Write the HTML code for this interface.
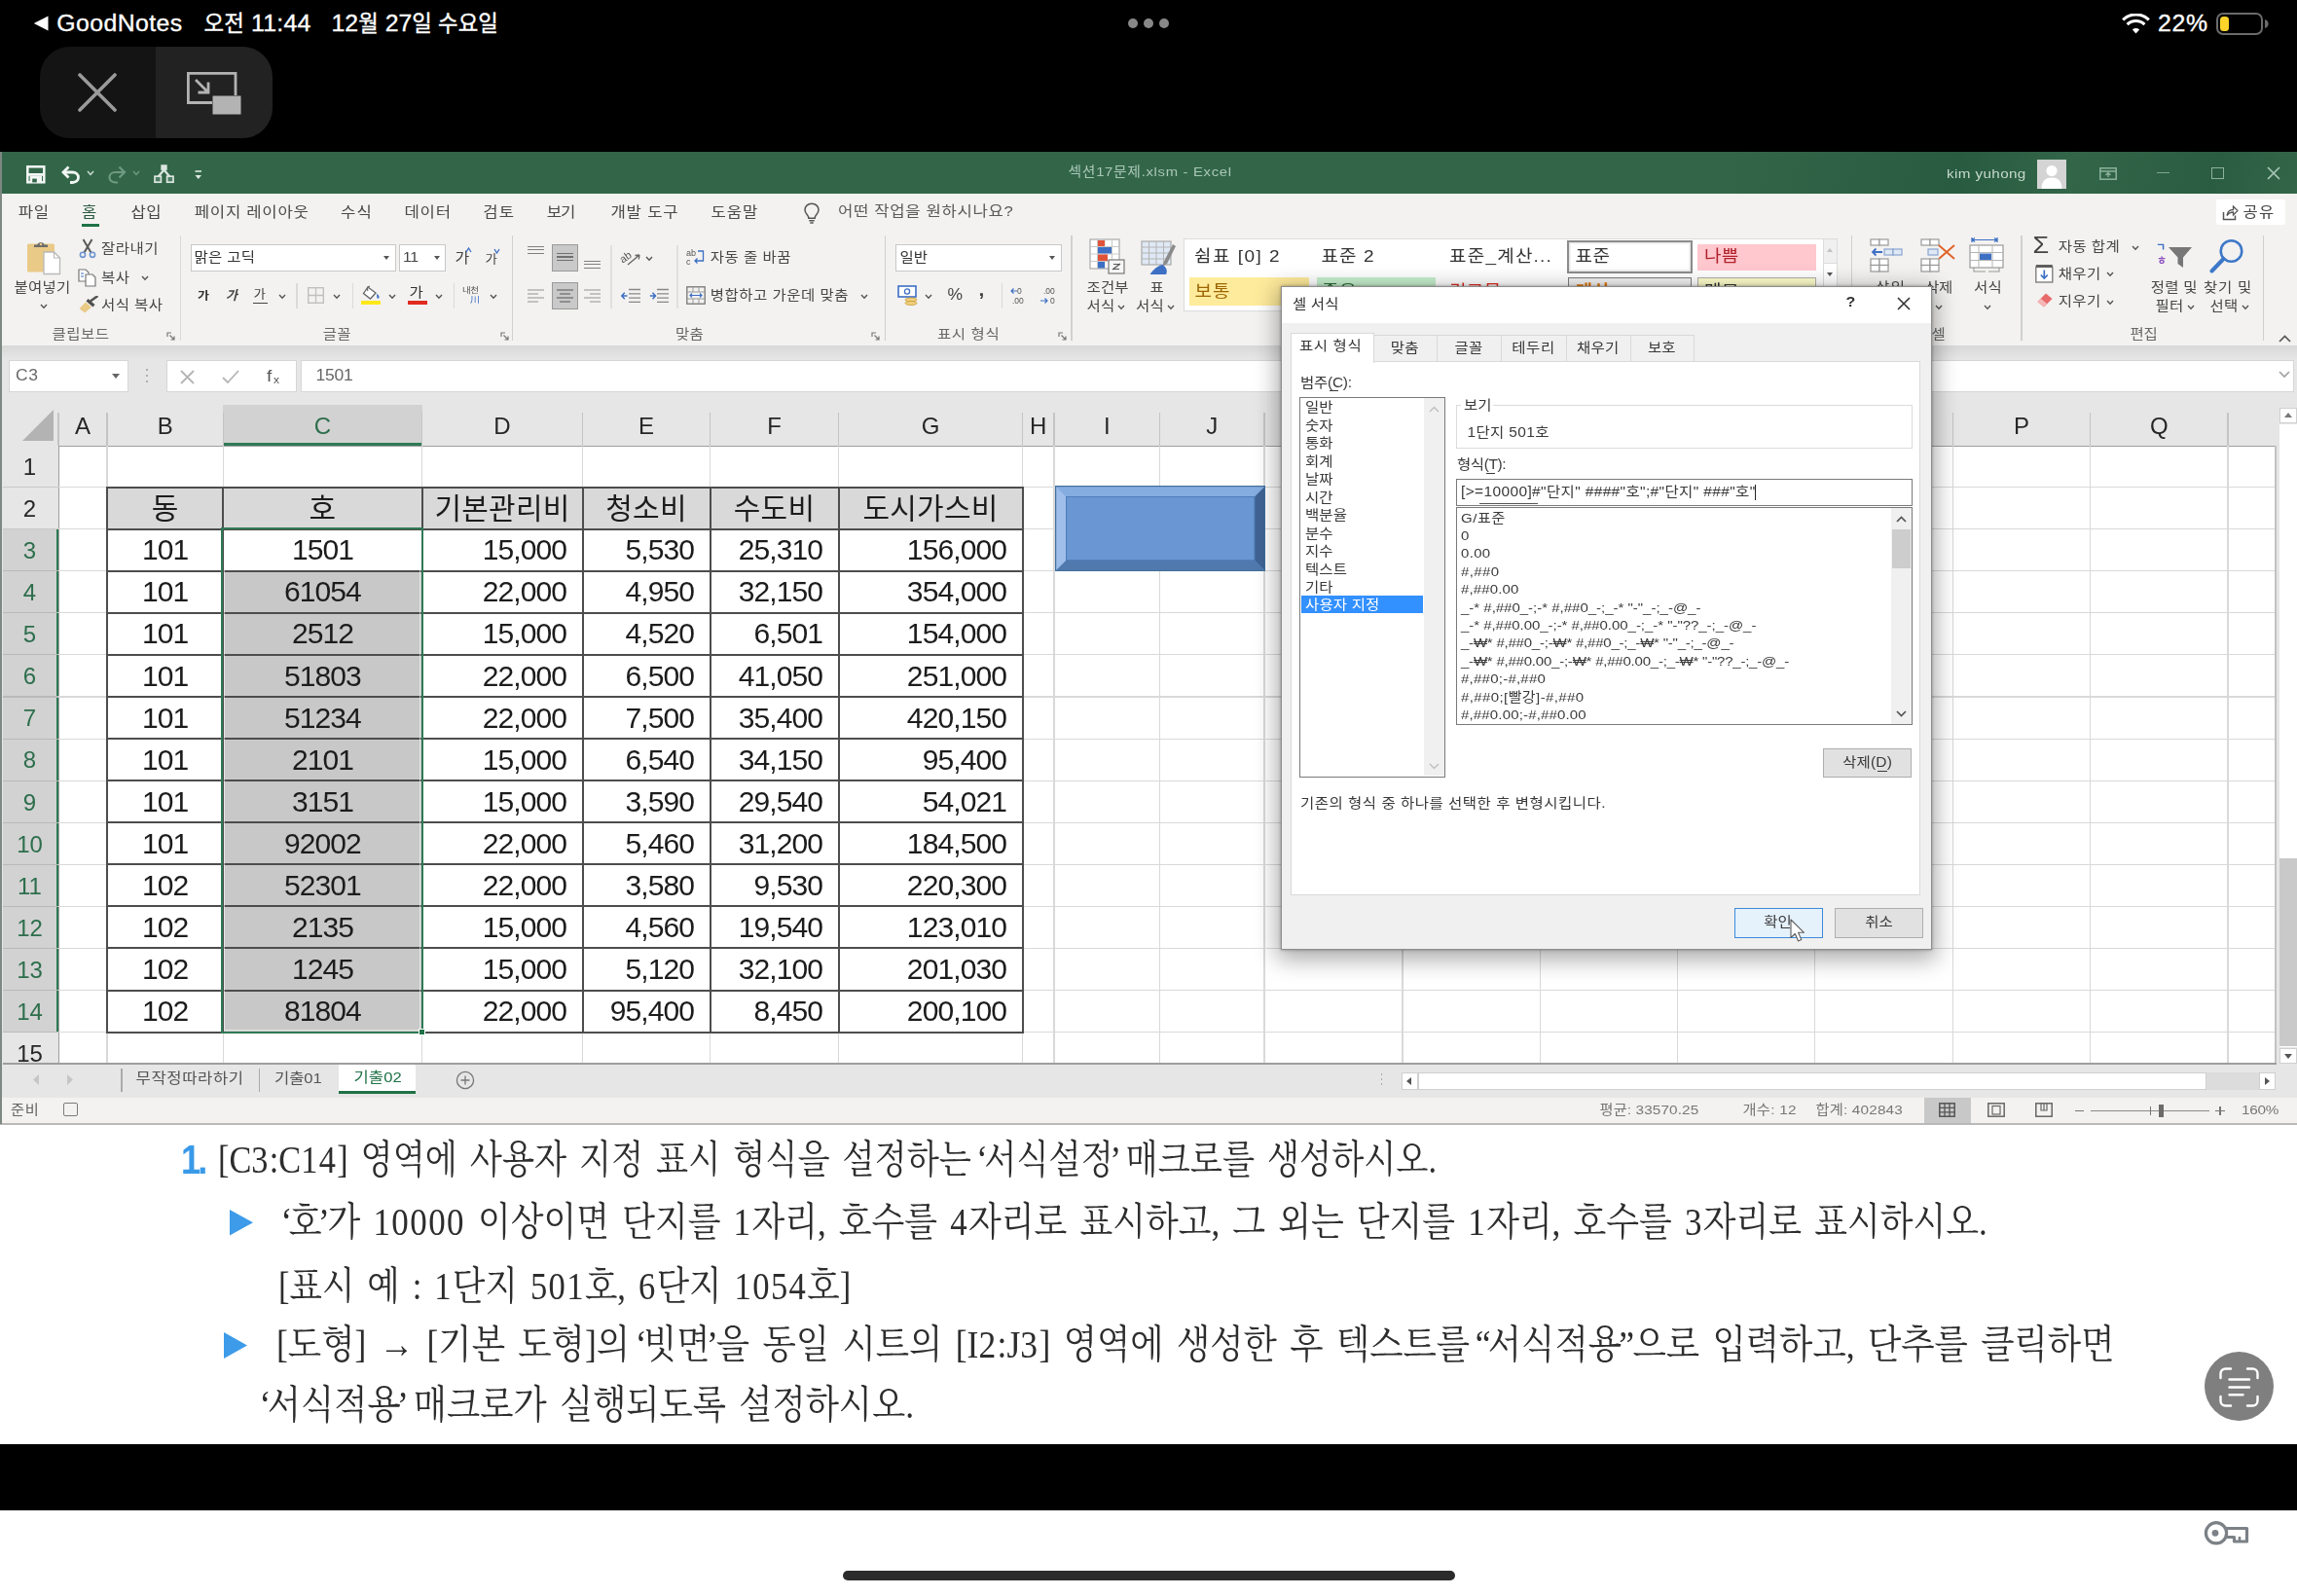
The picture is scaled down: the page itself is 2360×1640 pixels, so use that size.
<!DOCTYPE html>
<html lang="ko"><head><meta charset="utf-8"><title>Excel lecture</title>
<style>
html,body{margin:0;padding:0;background:#000}
body{width:2360px;height:1640px;position:relative;overflow:hidden;font-family:"Liberation Sans","Noto Sans CJK KR",sans-serif}
.a{position:absolute;box-sizing:border-box}
.t{position:absolute;white-space:nowrap;line-height:1}
.s{position:absolute;white-space:nowrap;line-height:1;font-family:"Liberation Serif","Noto Serif CJK SC",serif;color:#2d2d2d;transform-origin:0 50%}
#vid{position:absolute;left:0;top:0;width:2360px;height:1640px;filter:blur(.7px)}
#vid .t{transform:scaleY(.89)}
.cell{position:absolute;box-sizing:border-box;font-size:30px;line-height:43px;color:#1c1c1c;white-space:nowrap;letter-spacing:-.9px}
.hd{position:absolute;font-size:24px;line-height:42px;color:#262626;text-align:center;white-space:nowrap}
</style></head><body>
<div id="vid">
<div class="a" style="left:-10.0px;top:156.0px;width:2380.0px;height:42.5px;background:#336649;"></div>
<div class="a" style="left:1780.0px;top:156.0px;width:580.0px;height:42.5px;background:linear-gradient(100deg,rgba(0,0,0,0) 0%,rgba(20,70,45,.35) 40%,rgba(0,0,0,0) 60%,rgba(20,70,45,.3) 85%,rgba(0,0,0,0) 100%);"></div>
<div class="a" style="left:-10.0px;top:198.5px;width:2380.0px;height:157.0px;background:#f3f2f1;"></div>
<div class="a" style="left:-10.0px;top:355.0px;width:2380.0px;height:14.0px;background:linear-gradient(#d8d8d8,#e6e6e6);"></div>
<div class="a" style="left:-10.0px;top:368.5px;width:2380.0px;height:725.5px;background:#e6e6e6;"></div>
<div class="a" style="left:-10.0px;top:1093.0px;width:2380.0px;height:35.5px;background:#e6e6e6;"></div>
<div class="a" style="left:-10.0px;top:1128.0px;width:2380.0px;height:26.5px;background:#f3f2f1;"></div>
<div class="a" style="left:-10.0px;top:1154.0px;width:2380.0px;height:2.0px;background:#b9b9b9;"></div>
<div class="a" style="left:-10.0px;top:1156.0px;width:2380.0px;height:340.0px;background:#fff;"></div>
<div class="a" style="left:0.0px;top:156.0px;width:1.8px;height:999.0px;background:#7d8883;"></div>
<svg class="a" style="left:27.0px;top:170.0px;" width="20" height="19" viewBox="0 0 20 19"><rect x="1.3" y="1.3" width="17" height="16" fill="none" stroke="#f2f7f4" stroke-width="2.5"/><rect x="1.3" y="8" width="17" height="2.8" fill="#f2f7f4"/><rect x="3.600" y="10.8" width="12.4" height="6.200" fill="#f2f7f4"/><rect x="6.200" y="13.600" width="4.600" height="3.800" fill="#336649"/></svg>
<svg class="a" style="left:63.0px;top:170.0px;" width="20" height="19" viewBox="0 0 20 19"><path d="M2 7H11.5C15 7 17.5 9.3 17.5 12.3C17.5 15.3 15 17.5 11.5 17.5H9" fill="none" stroke="#f2f7f4" stroke-width="2.800"/><path d="M7.5 1.5L2 7L7.5 12.5" fill="none" stroke="#f2f7f4" stroke-width="2.800"/></svg>
<svg class="a" style="left:89.0px;top:175.0px;" width="8" height="6" viewBox="0 0 8 6"><path d="M1 1L4 4.5L7 1" stroke="#cfe0d6" stroke-width="1.4" fill="none"/></svg>
<svg class="a" style="left:110.0px;top:170.0px;" width="20" height="19" viewBox="0 0 20 19"><path d="M18 7H8.5C5 7 2.5 9.3 2.5 12.3C2.5 15.3 5 17.5 8.5 17.5H11" fill="none" stroke="#6f9a82" stroke-width="2.2"/><path d="M12.5 1.5L18 7L12.5 12.5" fill="none" stroke="#6f9a82" stroke-width="2.2"/></svg>
<svg class="a" style="left:136.0px;top:175.0px;" width="8" height="6" viewBox="0 0 8 6"><path d="M1 1L4 4.5L7 1" stroke="#6f9a82" stroke-width="1.4" fill="none"/></svg>
<svg class="a" style="left:157.5px;top:169.0px;" width="21" height="20" viewBox="0 0 21 20"><rect x="7.300" y=".3" width="6.400" height="5.600" fill="#dbe7e0"/><path d="M10.500 5.500L4.200 13M10.500 5.500L16.800 13" stroke="#dbe7e0" stroke-width="2.200"/><rect x="1" y="12.200" width="6.400" height="6" fill="#4d7d63" stroke="#dbe7e0" stroke-width="1.700"/><rect x="13.600" y="12.200" width="6.400" height="6" fill="#4d7d63" stroke="#dbe7e0" stroke-width="1.700"/></svg>
<svg class="a" style="left:199.5px;top:174.5px;" width="8" height="10" viewBox="0 0 8 10"><path d="M.5 1H7" stroke="#c9dbd0" stroke-width="1.800"/><path d="M.5 5L3.750 9L7 5Z" fill="#dfeae3"/></svg>
<div class="t" style="top:170.2px;font-size:14.8px;color:#a9c6b6;left:1097.5px;letter-spacing:0.71px;">섹션17문제.xlsm  -  Excel</div>
<div class="t" style="top:171.1px;font-size:15.2px;color:#c4d8cc;left:2000.0px;letter-spacing:0.40px;">kim yuhong</div>
<div class="a" style="left:2093.0px;top:163.5px;width:30.0px;height:30.0px;background:#d4d4d4;"></div>
<svg class="a" style="left:2093.0px;top:163.5px;" width="30" height="30" viewBox="0 0 30 30"><circle cx="15" cy="11.5" r="5.6" fill="#fff"/><path d="M4.5 30C4.5 21.5 9 18.5 15 18.5C21 18.5 25.5 21.5 25.5 30Z" fill="#fff"/></svg>
<svg class="a" style="left:2157.0px;top:171.5px;" width="18" height="13" viewBox="0 0 18 13"><rect x=".8" y=".8" width="16.4" height="11.4" fill="none" stroke="#8db29e" stroke-width="1.5"/><path d="M.8 4H17.2M9 10V5.5M6.5 8L9 5.5L11.5 8" fill="none" stroke="#8db29e" stroke-width="1.4"/></svg>
<div class="a" style="left:2216.0px;top:176.5px;width:13.0px;height:1.6px;background:#7da58f;"></div>
<div class="a" style="left:2272.0px;top:171.5px;width:13.0px;height:12.0px;border:1.6px solid #8db29e;"></div>
<svg class="a" style="left:2329.0px;top:171.0px;" width="14" height="14" viewBox="0 0 14 14"><path d="M1 1L13 13M13 1L1 13" stroke="#a9c6b6" stroke-width="1.7" fill="none"/></svg>
<div class="t" style="top:210.8px;font-size:16.7px;color:#4a4a4a;left:18.8px;letter-spacing:0.49px;">파일</div>
<div class="t" style="top:210.8px;font-size:16.7px;color:#2b5a41;left:84.0px;">홈</div>
<div class="t" style="top:210.8px;font-size:16.7px;color:#4a4a4a;left:134.5px;letter-spacing:0.44px;">삽입</div>
<div class="t" style="top:210.8px;font-size:16.7px;color:#4a4a4a;left:199.8px;letter-spacing:0.70px;">페이지 레이아웃</div>
<div class="t" style="top:210.8px;font-size:16.7px;color:#4a4a4a;left:350.0px;letter-spacing:1.09px;">수식</div>
<div class="t" style="top:210.8px;font-size:16.7px;color:#4a4a4a;left:415.4px;letter-spacing:0.81px;">데이터</div>
<div class="t" style="top:210.8px;font-size:16.7px;color:#4a4a4a;left:496.3px;letter-spacing:1.09px;">검토</div>
<div class="t" style="top:210.8px;font-size:16.7px;color:#4a4a4a;left:561.7px;letter-spacing:-1.11px;">보기</div>
<div class="t" style="top:210.8px;font-size:16.7px;color:#4a4a4a;left:627.4px;letter-spacing:0.81px;">개발 도구</div>
<div class="t" style="top:210.8px;font-size:16.7px;color:#4a4a4a;left:730.6px;letter-spacing:0.81px;">도움말</div>
<div class="a" style="left:84.0px;top:230.3px;width:18.0px;height:3.0px;background:#1f7246;"></div>
<svg class="a" style="left:825.0px;top:208.0px;" width="18" height="22" viewBox="0 0 18 22"><path d="M9 1.2C4.8 1.2 2 4.2 2 7.8C2 10.4 3.6 11.8 4.8 13.4C5.5 14.3 5.8 15.2 5.8 16.2H12.2C12.2 15.2 12.5 14.3 13.2 13.4C14.4 11.8 16 10.4 16 7.8C16 4.2 13.2 1.2 9 1.2Z" fill="none" stroke="#555" stroke-width="1.5"/><path d="M6.3 18.8H11.7M7.3 21H10.7" stroke="#555" stroke-width="1.4"/></svg>
<div class="t" style="top:210.1px;font-size:16.7px;color:#5a5a5a;left:861.0px;letter-spacing:0.65px;">어떤 작업을 원하시나요?</div>
<div class="a" style="left:2276.5px;top:205.0px;width:71.0px;height:26.0px;background:#fff;border-radius:2px;"></div>
<svg class="a" style="left:2283.0px;top:209.5px;" width="17" height="17" viewBox="0 0 17 17"><path d="M1.5 8V15.5H13.5V11.5" fill="none" stroke="#555" stroke-width="1.5"/><path d="M5 11.5C5.5 7.5 8 5.5 11.5 5.5V2L16 6.5L11.5 11V8C9 8 6.8 9 5 11.5Z" fill="none" stroke="#555" stroke-width="1.3"/></svg>
<div class="t" style="top:209.9px;font-size:16.5px;color:#444;left:2304.5px;letter-spacing:1.21px;">공유</div>
<svg class="a" style="left:27.0px;top:244.5px;" width="38" height="38" viewBox="0 0 38 38"><rect x="1" y="5.500" width="28" height="29" rx="1.5" fill="#e9ca86"/><path d="M8 9V6.500H11.500C11.500 3 18.500 3 18.500 6.500H22V9Z" fill="#6b6b6b"/><circle cx="15" cy="6" r="1.300" fill="#e9ca86"/><path d="M18 14H28.500L34.500 20V36.500H18Z" fill="#fff" stroke="#b9b9b9" stroke-width="1.300"/><path d="M28.500 14V20H34.500" fill="none" stroke="#b9b9b9" stroke-width="1.200"/></svg>
<div class="t" style="top:287.9px;font-size:15.5px;color:#484848;left:14.4px;letter-spacing:0.26px;">붙여넣기</div>
<svg class="a" style="left:40.5px;top:312.0px;" width="8" height="6" viewBox="0 0 8 6"><path d="M1 1L4 4.3L7 1" stroke="#555" stroke-width="1.4" fill="none"/></svg>
<svg class="a" style="left:80.0px;top:245.0px;" width="20" height="21" viewBox="0 0 20 21"><path d="M5.5 1L13.5 14.500M14.5 1L6.5 14.500" stroke="#5a5a5a" stroke-width="2"/><circle cx="5" cy="16.800" r="2.600" fill="none" stroke="#6f95d3" stroke-width="1.600"/><circle cx="15" cy="16.800" r="2.600" fill="none" stroke="#6f95d3" stroke-width="1.600"/></svg>
<div class="t" style="top:247.9px;font-size:15.5px;color:#484848;left:104.0px;letter-spacing:0.46px;">잘라내기</div>
<svg class="a" style="left:80.0px;top:276.0px;" width="20" height="19" viewBox="0 0 20 19"><path d="M1 1H8L11 4V13H1Z" fill="#fff" stroke="#777" stroke-width="1.2"/><path d="M8 6H15L18 9V18H8Z" fill="#fff" stroke="#777" stroke-width="1.2"/><path d="M3 5H6M3 8H6" stroke="#3d6fc4" stroke-width="1.1"/></svg>
<div class="t" style="top:277.7px;font-size:15.5px;color:#484848;left:104.0px;letter-spacing:0.48px;">복사</div>
<svg class="a" style="left:145.0px;top:283.0px;" width="8" height="6" viewBox="0 0 8 6"><path d="M1 1L4 4.3L7 1" stroke="#555" stroke-width="1.4" fill="none"/></svg>
<svg class="a" style="left:80.0px;top:304.0px;" width="21" height="19" viewBox="0 0 21 19"><path d="M13.500 5L19.500 .8" stroke="#555" stroke-width="2.600" stroke-linecap="round"/><path d="M8.500 5.500L15.500 11.500L17.500 9L10.500 3Z" fill="#4f4f4f"/><path d="M8 6.500L14 11.800L7 17.500L1.500 13Z" fill="#e9ca86"/></svg>
<div class="t" style="top:306.4px;font-size:15.5px;color:#484848;left:104.0px;letter-spacing:0.43px;">서식 복사</div>
<div class="t" style="top:336.4px;font-size:15.5px;color:#686868;left:53.6px;letter-spacing:0.46px;">클립보드</div>
<svg class="a" style="left:170.5px;top:341.0px;" width="9" height="9" viewBox="0 0 9 9"><path d="M1 5V1H5" fill="none" stroke="#777" stroke-width="1.2"/><path d="M3.5 3.5L8 8M8 4.5V8H4.5" fill="none" stroke="#777" stroke-width="1.2"/></svg>
<div class="a" style="left:184.9px;top:241.5px;width:1.2px;height:108.0px;background:#d9d9d9;"></div>
<div class="a" style="left:196.0px;top:250.5px;width:210.5px;height:28.0px;background:#fff;border:1px solid #c8c8c8;"></div>
<div class="t" style="top:257.4px;font-size:15.5px;color:#333;left:199.5px;letter-spacing:0.31px;">맑은 고딕</div>
<div class="a" style="left:393.5px;top:263px;border-left:3.8px solid transparent;border-right:3.8px solid transparent;border-top:4.5px solid #555"></div>
<div class="a" style="left:410.0px;top:250.5px;width:48.0px;height:28.0px;background:#fff;border:1px solid #c8c8c8;"></div>
<div class="t" style="top:257.3px;font-size:15.8px;color:#444;left:414.0px;letter-spacing:-0.25px;">11</div>
<div class="a" style="left:445.5px;top:263px;border-left:3.8px solid transparent;border-right:3.8px solid transparent;border-top:4.5px solid #555"></div>
<div class="t" style="top:258.2px;font-size:16px;color:#444;left:467.5px;">가</div>
<svg class="a" style="left:478.0px;top:254.0px;" width="7" height="6" viewBox="0 0 7 6"><path d="M1 5L3.5 1L6 5" stroke="#3d6fc4" stroke-width="1.3" fill="none"/></svg>
<div class="t" style="top:260.4px;font-size:13.5px;color:#444;left:498.5px;">가</div>
<svg class="a" style="left:507.0px;top:255.0px;" width="7" height="6" viewBox="0 0 7 6"><path d="M1 1L3.5 5L6 1" stroke="#3d6fc4" stroke-width="1.3" fill="none"/></svg>
<div class="t" style="top:297.1px;font-size:13px;color:#333;left:203.0px;font-weight:bold;">가</div>
<div class="t" style="top:297.1px;font-size:13px;color:#444;left:232.5px;transform:skewX(-14deg);font-weight:bold;">가</div>
<div class="t" style="top:296.4px;font-size:13.5px;color:#444;left:260.5px;">가</div>
<div class="a" style="left:259.5px;top:311.0px;width:15.0px;height:1.4px;background:#444;"></div>
<svg class="a" style="left:285.5px;top:301.5px;" width="8" height="6" viewBox="0 0 8 6"><path d="M1 1L4 4.3L7 1" stroke="#555" stroke-width="1.4" fill="none"/></svg>
<div class="a" style="left:304.4px;top:291.0px;width:1.2px;height:26.0px;background:#dadada;"></div>
<svg class="a" style="left:316.0px;top:295.0px;" width="17" height="17" viewBox="0 0 17 17"><rect x=".7" y=".7" width="15.6" height="15.6" fill="none" stroke="#c0c0c0" stroke-width="1.4"/><path d="M8.5 0V17M0 8.5H17" stroke="#c0c0c0" stroke-width="1.3"/></svg>
<svg class="a" style="left:342.0px;top:301.5px;" width="8" height="6" viewBox="0 0 8 6"><path d="M1 1L4 4.3L7 1" stroke="#555" stroke-width="1.4" fill="none"/></svg>
<div class="a" style="left:361.7px;top:291.0px;width:1.2px;height:26.0px;background:#dadada;"></div>
<svg class="a" style="left:371.0px;top:293.0px;" width="21" height="15" viewBox="0 0 21 15"><path d="M7 2L15 8L9.5 14L2.5 8.5Z" fill="#fff" stroke="#666" stroke-width="1.3"/><path d="M9 1C6.5 1.5 6 4 7 6" fill="none" stroke="#666" stroke-width="1.2"/><path d="M16.5 8.5C18 10.5 19.5 12 18 13.5C16.8 14.3 15.5 13 16.5 8.5Z" fill="#3d6fc4"/></svg>
<div class="a" style="left:371.0px;top:308.8px;width:19.5px;height:4.6px;background:#ffe81a;"></div>
<svg class="a" style="left:398.5px;top:301.5px;" width="8" height="6" viewBox="0 0 8 6"><path d="M1 1L4 4.3L7 1" stroke="#555" stroke-width="1.4" fill="none"/></svg>
<div class="t" style="top:292.9px;font-size:15.5px;color:#333;left:420.5px;">가</div>
<div class="a" style="left:418.5px;top:308.8px;width:20.5px;height:4.6px;background:#e02b20;"></div>
<svg class="a" style="left:446.5px;top:301.5px;" width="8" height="6" viewBox="0 0 8 6"><path d="M1 1L4 4.3L7 1" stroke="#555" stroke-width="1.4" fill="none"/></svg>
<div class="a" style="left:466.2px;top:291.0px;width:1.2px;height:26.0px;background:#dadada;"></div>
<div class="t" style="top:293.3px;font-size:9.5px;color:#555;left:475.0px;letter-spacing:-.5px;">내천</div>
<div class="t" style="top:303.1px;font-size:10px;color:#3d6fc4;left:483.0px;font-family:"Liberation Sans","Noto Sans CJK KR","Noto Sans CJK SC",sans-serif;">川</div>
<svg class="a" style="left:503.0px;top:301.5px;" width="8" height="6" viewBox="0 0 8 6"><path d="M1 1L4 4.3L7 1" stroke="#555" stroke-width="1.4" fill="none"/></svg>
<div class="t" style="top:336.4px;font-size:15.5px;color:#686868;left:331.8px;letter-spacing:0.18px;">글꼴</div>
<svg class="a" style="left:514.0px;top:341.0px;" width="9" height="9" viewBox="0 0 9 9"><path d="M1 5V1H5" fill="none" stroke="#777" stroke-width="1.2"/><path d="M3.5 3.5L8 8M8 4.5V8H4.5" fill="none" stroke="#777" stroke-width="1.2"/></svg>
<div class="a" style="left:525.8px;top:241.5px;width:1.2px;height:108.0px;background:#d0d0d0;"></div>
<div class="a" style="left:542.0px;top:252.5px;width:17.0px;height:1.2px;background:#808080;"></div>
<div class="a" style="left:542.0px;top:256.1px;width:17.0px;height:1.2px;background:#808080;"></div>
<div class="a" style="left:542.0px;top:259.7px;width:17.0px;height:1.2px;background:#808080;"></div>
<div class="a" style="left:567.0px;top:250.5px;width:26.5px;height:28.0px;background:#c9c9c9;border:1px solid #9a9a9a;"></div>
<div class="a" style="left:572.0px;top:259.5px;width:17.0px;height:1.3px;background:#707070;"></div>
<div class="a" style="left:572.0px;top:263.3px;width:17.0px;height:1.3px;background:#707070;"></div>
<div class="a" style="left:572.0px;top:267.1px;width:17.0px;height:1.3px;background:#707070;"></div>
<div class="a" style="left:600.0px;top:267.5px;width:17.0px;height:1.2px;background:#808080;"></div>
<div class="a" style="left:600.0px;top:271.1px;width:17.0px;height:1.2px;background:#808080;"></div>
<div class="a" style="left:600.0px;top:274.7px;width:17.0px;height:1.2px;background:#808080;"></div>
<div class="a" style="left:542.0px;top:296.5px;width:17.0px;height:2.8px;background:#c2c2c2;"></div>
<div class="a" style="left:542.0px;top:300.5px;width:11.0px;height:2.8px;background:#c2c2c2;"></div>
<div class="a" style="left:542.0px;top:304.5px;width:17.0px;height:2.8px;background:#c2c2c2;"></div>
<div class="a" style="left:542.0px;top:308.5px;width:11.0px;height:2.8px;background:#c2c2c2;"></div>
<div class="a" style="left:567.0px;top:290.0px;width:26.5px;height:28.0px;background:#c9c9c9;border:1px solid #9a9a9a;"></div>
<div class="a" style="left:572.0px;top:296.5px;width:17.0px;height:2.8px;background:#8f8f8f;"></div>
<div class="a" style="left:575.0px;top:300.5px;width:11.0px;height:2.8px;background:#8f8f8f;"></div>
<div class="a" style="left:572.0px;top:304.5px;width:17.0px;height:2.8px;background:#8f8f8f;"></div>
<div class="a" style="left:575.0px;top:308.5px;width:11.0px;height:2.8px;background:#8f8f8f;"></div>
<div class="a" style="left:600.0px;top:296.5px;width:17.0px;height:2.8px;background:#c2c2c2;"></div>
<div class="a" style="left:606.0px;top:300.5px;width:11.0px;height:2.8px;background:#c2c2c2;"></div>
<div class="a" style="left:600.0px;top:304.5px;width:17.0px;height:2.8px;background:#c2c2c2;"></div>
<div class="a" style="left:606.0px;top:308.5px;width:11.0px;height:2.8px;background:#c2c2c2;"></div>
<div class="a" style="left:627.4px;top:252.0px;width:1.2px;height:65.0px;background:#e0e0e0;"></div>
<svg class="a" style="left:637.0px;top:254.0px;" width="24" height="20" viewBox="0 0 24 20"><text x="1" y="13" font-size="11" font-family="Liberation Sans" fill="#555" transform="rotate(-35 8 12)">ab</text><path d="M8 18L20 8M20 8L15.5 8.5M20 8L19.3 12.5" stroke="#666" stroke-width="1.3" fill="none"/></svg>
<svg class="a" style="left:662.5px;top:262.5px;" width="8" height="6" viewBox="0 0 8 6"><path d="M1 1L4 4.3L7 1" stroke="#555" stroke-width="1.4" fill="none"/></svg>
<svg class="a" style="left:638.0px;top:296.0px;" width="20" height="16" viewBox="0 0 20 16"><path d="M8 1.5H20M8 5.8H20M8 10.1H20M8 14.4H20" stroke="#888" stroke-width="1.3"/><path d="M6.5 8H0.8M3.8 4.8L0.8 8L3.8 11.2" stroke="#3d6fc4" stroke-width="1.5" fill="none"/></svg>
<svg class="a" style="left:667.0px;top:296.0px;" width="20" height="16" viewBox="0 0 20 16"><path d="M8 1.5H20M8 5.8H20M8 10.1H20M8 14.4H20" stroke="#888" stroke-width="1.3"/><path d="M0.8 8H6.5M3.5 4.8L6.5 8L3.5 11.2" stroke="#3d6fc4" stroke-width="1.5" fill="none"/></svg>
<div class="a" style="left:695.4px;top:252.0px;width:1.2px;height:65.0px;background:#e0e0e0;"></div>
<svg class="a" style="left:705.0px;top:255.0px;" width="20" height="19" viewBox="0 0 20 19"><text x="0" y="8" font-size="9" font-family="Liberation Sans" fill="#555">ab</text><text x="0" y="17" font-size="9" font-family="Liberation Sans" fill="#555">c</text><path d="M12 3H17.5V13H9M11.5 10.5L9 13L11.5 15.5" stroke="#3d6fc4" stroke-width="1.3" fill="none"/></svg>
<div class="t" style="top:256.9px;font-size:15.5px;color:#484848;left:729.8px;letter-spacing:0.48px;">자동 줄 바꿈</div>
<svg class="a" style="left:704.5px;top:294.0px;" width="20" height="19" viewBox="0 0 20 19"><rect x=".8" y=".8" width="18.4" height="17.4" fill="none" stroke="#777" stroke-width="1.3"/><path d="M.8 6H19.2M.8 13H19.2M7 .8V6M13 .8V6M7 13V18.2M13 13V18.2" stroke="#999" stroke-width="1"/><path d="M4 9.5H16M6 7.5L4 9.5L6 11.5M14 7.5L16 9.5L14 11.5" stroke="#3d6fc4" stroke-width="1.2" fill="none"/></svg>
<div class="t" style="top:296.4px;font-size:15.5px;color:#484848;left:729.8px;letter-spacing:0.47px;">병합하고 가운데 맞춤</div>
<svg class="a" style="left:883.5px;top:301.5px;" width="8" height="6" viewBox="0 0 8 6"><path d="M1 1L4 4.3L7 1" stroke="#555" stroke-width="1.4" fill="none"/></svg>
<div class="t" style="top:336.4px;font-size:15.5px;color:#686868;left:694.0px;letter-spacing:0.23px;">맞춤</div>
<svg class="a" style="left:895.0px;top:341.0px;" width="9" height="9" viewBox="0 0 9 9"><path d="M1 5V1H5" fill="none" stroke="#777" stroke-width="1.2"/><path d="M3.5 3.5L8 8M8 4.5V8H4.5" fill="none" stroke="#777" stroke-width="1.2"/></svg>
<div class="a" style="left:909.0px;top:241.5px;width:1.2px;height:108.0px;background:#d0d0d0;"></div>
<div class="a" style="left:920.0px;top:250.5px;width:170.5px;height:28.0px;background:#fff;border:1px solid #c8c8c8;"></div>
<div class="t" style="top:257.4px;font-size:15.5px;color:#333;left:924.5px;letter-spacing:-0.02px;">일반</div>
<div class="a" style="left:1078px;top:263px;border-left:3.8px solid transparent;border-right:3.8px solid transparent;border-top:4.5px solid #555"></div>
<svg class="a" style="left:922.0px;top:292.5px;" width="23" height="22" viewBox="0 0 23 22"><rect x="1" y="1" width="18" height="11" fill="#fff" stroke="#3d6fc4" stroke-width="1.6"/><circle cx="10" cy="6.5" r="2.6" fill="none" stroke="#3d6fc4" stroke-width="1.3"/><ellipse cx="14" cy="15" rx="6" ry="2" fill="#f1cf7f" stroke="#c79b36" stroke-width=".8"/><ellipse cx="14" cy="18.5" rx="6" ry="2" fill="#f1cf7f" stroke="#c79b36" stroke-width=".8"/></svg>
<svg class="a" style="left:950.0px;top:301.5px;" width="8" height="6" viewBox="0 0 8 6"><path d="M1 1L4 4.3L7 1" stroke="#555" stroke-width="1.4" fill="none"/></svg>
<div class="t" style="top:295.4px;font-size:17.5px;color:#444;left:973.5px;">%</div>
<div class="t" style="top:287.2px;font-size:21px;color:#444;left:1005.5px;font-weight:bold;">,</div>
<div class="a" style="left:1029.1px;top:291.0px;width:1.2px;height:26.0px;background:#dadada;"></div>
<svg class="a" style="left:1038.0px;top:294.0px;" width="19" height="20" viewBox="0 0 19 20"><text x="7" y="8" font-size="8.5" font-family="Liberation Sans" fill="#555">0</text><text x="2" y="18" font-size="8.5" font-family="Liberation Sans" fill="#555">.00</text><path d="M7 5H1M3.5 2.5L1 5L3.5 7.5" stroke="#3d6fc4" stroke-width="1.2" fill="none"/></svg>
<svg class="a" style="left:1068.0px;top:294.0px;" width="19" height="20" viewBox="0 0 19 20"><text x="4" y="8" font-size="8.5" font-family="Liberation Sans" fill="#555">.00</text><text x="11" y="18" font-size="8.5" font-family="Liberation Sans" fill="#555">0</text><path d="M1 15H8M5.5 12.5L8 15L5.5 17.5" stroke="#3d6fc4" stroke-width="1.2" fill="none"/></svg>
<div class="t" style="top:336.4px;font-size:15.5px;color:#686868;left:963.0px;letter-spacing:0.59px;">표시 형식</div>
<svg class="a" style="left:1086.5px;top:341.0px;" width="9" height="9" viewBox="0 0 9 9"><path d="M1 5V1H5" fill="none" stroke="#777" stroke-width="1.2"/><path d="M3.5 3.5L8 8M8 4.5V8H4.5" fill="none" stroke="#777" stroke-width="1.2"/></svg>
<div class="a" style="left:1100.4px;top:241.5px;width:1.2px;height:108.0px;background:#d0d0d0;"></div>
<svg class="a" style="left:1119.0px;top:245.0px;" width="38" height="38" viewBox="0 0 38 38"><rect x="1" y="1" width="30" height="30" fill="#fff" stroke="#a9a9a9" stroke-width="1.2"/><path d="M1 8.5H31M1 16H31M1 23.5H31M8.5 1V31M16 1V31M23.5 1V31" stroke="#c9c9c9" stroke-width="1"/><rect x="9" y="2" width="7" height="6" fill="#e0533a"/><rect x="9" y="9" width="14" height="6.5" fill="#3d6fc4"/><rect x="9" y="16.5" width="10" height="6.5" fill="#e0533a"/><rect x="9" y="24" width="7" height="6.5" fill="#3d6fc4"/><rect x="20" y="22" width="16" height="14" fill="#f6f6f6" stroke="#777" stroke-width="1.2"/><path d="M24 32L32 26M25 26.5H31M25 31.5H31" stroke="#555" stroke-width="1.2"/></svg>
<div class="t" style="top:287.9px;font-size:15.5px;color:#484848;left:1116.5px;letter-spacing:0.14px;">조건부</div>
<div class="t" style="top:306.9px;font-size:15.5px;color:#484848;left:1116.5px;letter-spacing:0.28px;">서식</div>
<svg class="a" style="left:1148.0px;top:312.5px;" width="8" height="6" viewBox="0 0 8 6"><path d="M1 1L4 4.3L7 1" stroke="#555" stroke-width="1.4" fill="none"/></svg>
<svg class="a" style="left:1172.0px;top:247.0px;" width="38" height="36" viewBox="0 0 38 36"><rect x="1" y="1" width="30" height="24" fill="#dfe8f5" stroke="#a9a9a9" stroke-width="1.2"/><path d="M1 7H31M1 13H31M1 19H31M8.5 1V25M16 1V25M23.5 1V25" stroke="#b5b5b5" stroke-width="1"/><path d="M36 6L27 24L22.5 26.5L24 21.5L33 4Z" fill="#8a8a8a"/><path d="M22 25C18 26 13 29.5 9.5 35H26C28 31 26 27 22 25Z" fill="#3d6fc4"/></svg>
<div class="t" style="top:287.9px;font-size:15.5px;color:#484848;left:1181.5px;">표</div>
<div class="t" style="top:306.9px;font-size:15.5px;color:#484848;left:1167.0px;letter-spacing:0.28px;">서식</div>
<svg class="a" style="left:1199.0px;top:312.5px;" width="8" height="6" viewBox="0 0 8 6"><path d="M1 1L4 4.3L7 1" stroke="#555" stroke-width="1.4" fill="none"/></svg>
<div class="a" style="left:1215.5px;top:244.5px;width:672.5px;height:75.0px;background:#fff;border:1px solid #dcdcdc;"></div>
<div class="t" style="top:253.7px;font-size:19px;color:#333;left:1227.0px;letter-spacing:1.49px;">쉼표 [0] 2</div>
<div class="t" style="top:253.7px;font-size:19px;color:#333;left:1357.5px;letter-spacing:1.05px;">표준 2</div>
<div class="t" style="top:253.7px;font-size:19px;color:#333;left:1489.0px;letter-spacing:1.22px;">표준_계산...</div>
<div class="a" style="left:1610.0px;top:247.0px;width:128.5px;height:33.5px;background:#fff;border:2px solid #8c8c8c;box-shadow:inset 0 0 0 1.5px #e8e8e8;"></div>
<div class="t" style="top:253.7px;font-size:19px;color:#333;left:1618.5px;letter-spacing:0.52px;">표준</div>
<div class="a" style="left:1743.5px;top:251.0px;width:122.5px;height:27.0px;background:#ffc7ce;"></div>
<div class="t" style="top:254.2px;font-size:19px;color:#b0222c;left:1751.0px;letter-spacing:0.27px;">나쁨</div>
<div class="a" style="left:1221.5px;top:285.0px;width:123.0px;height:28.5px;background:#ffeb9c;"></div>
<div class="t" style="top:289.7px;font-size:19px;color:#9c6500;left:1227.5px;letter-spacing:0.92px;">보통</div>
<div class="a" style="left:1352.5px;top:285.0px;width:122.5px;height:28.5px;background:#c6efce;"></div>
<div class="t" style="top:289.7px;font-size:19px;color:#2a6b33;left:1358.0px;letter-spacing:0.77px;">좋음</div>
<div class="t" style="top:289.7px;font-size:19px;color:#e02b20;left:1489.0px;letter-spacing:0.35px;">경고문</div>
<div class="a" style="left:1611.0px;top:285.0px;width:126.5px;height:28.5px;background:#f2f2f2;border:1.5px solid #7f7f7f;"></div>
<div class="t" style="top:289.7px;font-size:19px;color:#e07a10;left:1618.5px;letter-spacing:0.52px;font-weight:bold;">계산</div>
<div class="a" style="left:1743.5px;top:285.0px;width:122.5px;height:28.5px;background:#ffffcc;border:1.2px solid #b2b2b2;"></div>
<div class="t" style="top:289.7px;font-size:19px;color:#333;left:1751.0px;letter-spacing:0.52px;">메모</div>
<div class="a" style="left:1872.5px;top:244.5px;width:15.5px;height:37.5px;background:#f0f0f0;border:1px solid #dcdcdc;"></div>
<div class="a" style="left:1877px;top:255px;border-left:3.3px solid transparent;border-right:3.3px solid transparent;border-bottom:4px solid #c2c2c2"></div>
<div class="a" style="left:1872.5px;top:270.0px;width:15.5px;height:25.0px;background:#fff;border:1px solid #dcdcdc;"></div>
<div class="a" style="left:1876.5px;top:279.5px;border-left:3.5px solid transparent;border-right:3.5px solid transparent;border-top:4.5px solid #555"></div>
<div class="a" style="left:1901.8px;top:241.5px;width:1.2px;height:108.0px;background:#d0d0d0;"></div>
<svg class="a" style="left:1921.0px;top:245.0px;" width="35" height="35" viewBox="0 0 35 35"><rect x="1" y="1" width="9" height="6" fill="#fff" stroke="#9a9a9a" stroke-width="1.2"/><rect x="10" y="1" width="9" height="6" fill="#fff" stroke="#9a9a9a" stroke-width="1.2"/><rect x="15" y="11" width="9" height="6" fill="#dfe8f5" stroke="#8aa4d0" stroke-width="1.2"/><rect x="24" y="11" width="9" height="6" fill="#dfe8f5" stroke="#8aa4d0" stroke-width="1.2"/><path d="M13 14H3M6.5 10.5L3 14L6.5 17.5" stroke="#3d6fc4" stroke-width="1.8" fill="none"/><rect x="1" y="21" width="9" height="6.5" fill="#fff" stroke="#9a9a9a" stroke-width="1.2"/><rect x="10" y="21" width="9" height="6.5" fill="#fff" stroke="#9a9a9a" stroke-width="1.2"/><rect x="1" y="27.5" width="9" height="6.5" fill="#fff" stroke="#9a9a9a" stroke-width="1.2"/><rect x="10" y="27.5" width="9" height="6.5" fill="#fff" stroke="#9a9a9a" stroke-width="1.2"/></svg>
<div class="t" style="top:287.9px;font-size:15.5px;color:#484848;left:1927.0px;letter-spacing:1.53px;">삽입</div>
<svg class="a" style="left:1936.0px;top:312.5px;" width="8" height="6" viewBox="0 0 8 6"><path d="M1 1L4 4.3L7 1" stroke="#555" stroke-width="1.4" fill="none"/></svg>
<svg class="a" style="left:1973.0px;top:245.0px;" width="37" height="35" viewBox="0 0 37 35"><rect x="1" y="1" width="9" height="6" fill="#fff" stroke="#9a9a9a" stroke-width="1.2"/><rect x="10" y="1" width="9" height="6" fill="#fff" stroke="#9a9a9a" stroke-width="1.2"/><rect x="8" y="11" width="10" height="6" fill="#dfe8f5" stroke="#8aa4d0" stroke-width="1.2"/><path d="M19 7L35 21M35 7L19 21" stroke="#e0632a" stroke-width="2"/><rect x="1" y="21" width="9" height="6.5" fill="#fff" stroke="#9a9a9a" stroke-width="1.2"/><rect x="10" y="21" width="9" height="6.5" fill="#fff" stroke="#9a9a9a" stroke-width="1.2"/><rect x="1" y="27.5" width="9" height="6.5" fill="#fff" stroke="#9a9a9a" stroke-width="1.2"/><rect x="10" y="27.5" width="9" height="6.5" fill="#fff" stroke="#9a9a9a" stroke-width="1.2"/></svg>
<div class="t" style="top:287.9px;font-size:15.5px;color:#484848;left:1978.0px;letter-spacing:-0.27px;">삭제</div>
<svg class="a" style="left:1987.5px;top:312.5px;" width="8" height="6" viewBox="0 0 8 6"><path d="M1 1L4 4.3L7 1" stroke="#555" stroke-width="1.4" fill="none"/></svg>
<svg class="a" style="left:2023.0px;top:243.0px;" width="37" height="38" viewBox="0 0 37 38"><path d="M3 3.5H29M3 1V6M29 1V6M6 1.5L3 3.5L6 5.5M26 1.5L29 3.5L26 5.5" stroke="#3d6fc4" stroke-width="1.2" fill="none"/><rect x="1" y="9" width="34" height="23" fill="#fff" stroke="#9a9a9a" stroke-width="1.2"/><path d="M1 16.5H35M1 24.5H35M10 9V32M24 9V32" stroke="#b5b5b5" stroke-width="1"/><rect x="11" y="17.5" width="12" height="6.5" fill="#3d6fc4"/><path d="M5 32V36H17M20 36H31V32" stroke="#9a9a9a" stroke-width="1.1" fill="none"/></svg>
<div class="t" style="top:287.9px;font-size:15.5px;color:#484848;left:2028.0px;letter-spacing:0.28px;">서식</div>
<svg class="a" style="left:2038.0px;top:312.5px;" width="8" height="6" viewBox="0 0 8 6"><path d="M1 1L4 4.3L7 1" stroke="#555" stroke-width="1.4" fill="none"/></svg>
<div class="t" style="top:336.4px;font-size:15.5px;color:#686868;left:1984.5px;">셀</div>
<div class="a" style="left:2076.4px;top:241.5px;width:1.2px;height:108.0px;background:#d0d0d0;"></div>
<div class="t" style="top:239.3px;font-size:27px;color:#444;left:2088.5px;font-family:"Liberation Sans","DejaVu Sans",sans-serif;">Σ</div>
<div class="t" style="top:246.4px;font-size:15.5px;color:#484848;left:2114.7px;letter-spacing:0.43px;">자동 합계</div>
<svg class="a" style="left:2190.0px;top:252.0px;" width="8" height="6" viewBox="0 0 8 6"><path d="M1 1L4 4.3L7 1" stroke="#555" stroke-width="1.4" fill="none"/></svg>
<svg class="a" style="left:2091.0px;top:272.0px;" width="19" height="19" viewBox="0 0 19 19"><rect x=".8" y="2.5" width="17" height="15.5" fill="#fff" stroke="#777" stroke-width="1.3"/><path d="M.8 1.2H17.8" stroke="#555" stroke-width="2.2"/><path d="M9.3 5.5V14M5.8 10.5L9.3 14L12.8 10.5" stroke="#3d6fc4" stroke-width="1.7" fill="none"/></svg>
<div class="t" style="top:273.9px;font-size:15.5px;color:#484848;left:2114.7px;letter-spacing:0.34px;">채우기</div>
<svg class="a" style="left:2163.5px;top:279.0px;" width="8" height="6" viewBox="0 0 8 6"><path d="M1 1L4 4.3L7 1" stroke="#555" stroke-width="1.4" fill="none"/></svg>
<svg class="a" style="left:2091.0px;top:300.0px;" width="19" height="17" viewBox="0 0 19 17"><path d="M11 1.5L17.5 7L9 15.5L2.5 10Z" fill="#e86a6a"/><path d="M5.8 6.8L12.3 12.3L9 15.5L2.5 10Z" fill="#f6b6b6"/></svg>
<div class="t" style="top:302.4px;font-size:15.5px;color:#484848;left:2114.7px;letter-spacing:0.34px;">지우기</div>
<svg class="a" style="left:2163.5px;top:307.5px;" width="8" height="6" viewBox="0 0 8 6"><path d="M1 1L4 4.3L7 1" stroke="#555" stroke-width="1.4" fill="none"/></svg>
<svg class="a" style="left:2213.0px;top:247.0px;" width="40" height="32" viewBox="0 0 40 32"><text x="2" y="11" font-size="11" font-family="Liberation Sans, Noto Sans CJK KR" fill="#3d6fc4" font-weight="bold">ㄱ</text><text x="3" y="25" font-size="11" font-family="Liberation Sans, Noto Sans CJK KR" fill="#8a4fbf" font-weight="bold">ㅎ</text><path d="M15 7H39L30 17.5V28L24.5 24V17.5Z" fill="#777"/></svg>
<div class="t" style="top:288.4px;font-size:15.5px;color:#484848;left:2209.8px;letter-spacing:0.23px;">정렬 및</div>
<div class="t" style="top:306.9px;font-size:15.5px;color:#484848;left:2214.5px;letter-spacing:0.23px;">필터</div>
<svg class="a" style="left:2246.5px;top:312.5px;" width="8" height="6" viewBox="0 0 8 6"><path d="M1 1L4 4.3L7 1" stroke="#555" stroke-width="1.4" fill="none"/></svg>
<svg class="a" style="left:2270.0px;top:245.0px;" width="36" height="36" viewBox="0 0 36 36"><circle cx="22.5" cy="13" r="10.8" fill="none" stroke="#3d78c8" stroke-width="2.6"/><path d="M14.5 21L2.5 33.5" stroke="#3d78c8" stroke-width="4" stroke-linecap="round"/></svg>
<div class="t" style="top:288.4px;font-size:15.5px;color:#484848;left:2264.0px;letter-spacing:0.73px;">찾기 및</div>
<div class="t" style="top:306.9px;font-size:15.5px;color:#484848;left:2270.5px;letter-spacing:0.23px;">선택</div>
<svg class="a" style="left:2302.5px;top:312.5px;" width="8" height="6" viewBox="0 0 8 6"><path d="M1 1L4 4.3L7 1" stroke="#555" stroke-width="1.4" fill="none"/></svg>
<div class="t" style="top:336.4px;font-size:15.5px;color:#686868;left:2188.5px;letter-spacing:-0.22px;">편집</div>
<div class="a" style="left:2325.0px;top:241.5px;width:1.2px;height:108.0px;background:#d0d0d0;"></div>
<svg class="a" style="left:2340.5px;top:344.0px;" width="13" height="8" viewBox="0 0 13 8"><path d="M1 7L6.5 1.5L12 7" stroke="#555" stroke-width="1.6" fill="none"/></svg>
<div class="a" style="left:8.5px;top:370.0px;width:123.0px;height:32.5px;background:#fff;border:1px solid #d6d6d6;"></div>
<div class="t" style="top:378.4px;font-size:17.5px;color:#6a6a6a;left:16.0px;letter-spacing:0.56px;">C3</div>
<div class="a" style="left:115px;top:384px;border-left:4.5px solid transparent;border-right:4.5px solid transparent;border-top:5px solid #666"></div>
<div class="a" style="left:150.0px;top:379.0px;width:2.0px;height:2.0px;background:#b0b0b0;"></div>
<div class="a" style="left:150.0px;top:385.0px;width:2.0px;height:2.0px;background:#b0b0b0;"></div>
<div class="a" style="left:150.0px;top:391.0px;width:2.0px;height:2.0px;background:#b0b0b0;"></div>
<div class="a" style="left:170.5px;top:370.0px;width:134.0px;height:32.5px;background:#fff;border:1px solid #d6d6d6;"></div>
<svg class="a" style="left:185.0px;top:380.0px;" width="15" height="15" viewBox="0 0 15 15"><path d="M1 1L14 14M14 1L1 14" stroke="#b5b5b5" stroke-width="1.8" fill="none"/></svg>
<svg class="a" style="left:228.0px;top:380.0px;" width="18" height="15" viewBox="0 0 18 15"><path d="M1 8L6 13L17 1" stroke="#b5b5b5" stroke-width="1.8" fill="none"/></svg>
<div class="t" style="top:377.2px;font-size:19px;color:#555;left:274.0px;font-family:"Liberation Serif",serif;font-style:italic;font-weight:bold;">f</div>
<div class="t" style="top:384.1px;font-size:12px;color:#555;left:281.0px;font-family:"Liberation Serif",serif;font-style:italic;font-weight:bold;">x</div>
<div class="a" style="left:309.0px;top:370.0px;width:2048.0px;height:32.5px;background:#fff;border:1px solid #d6d6d6;"></div>
<div class="t" style="top:378.4px;font-size:17.5px;color:#666;left:324.5px;letter-spacing:-0.21px;">1501</div>
<svg class="a" style="left:2341.0px;top:381.0px;" width="12" height="8" viewBox="0 0 12 8"><path d="M1 1L6 6L11 1" stroke="#a0a0a0" stroke-width="1.6" fill="none"/></svg>
<div class="a" style="left:60.0px;top:457.7px;width:2278.0px;height:635.3px;background:#fff;"></div>
<div class="a" style="left:2.5px;top:415.5px;width:2336.0px;height:43.0px;background:#e6e6e6;"></div>
<div class="a" style="left:229.0px;top:415.5px;width:204.5px;height:42.0px;background:#d2d2d2;"></div>
<div class="a" style="left:229.0px;top:455.3px;width:204.5px;height:2.4px;background:#2f7a55;"></div>
<div class="a" style="left:2.5px;top:457.5px;width:2336.0px;height:1.2px;background:#9e9e9e;"></div>
<svg class="a" style="left:23px;top:421px" width="33" height="33" viewBox="0 0 33 33"><path d="M32 0V32H0Z" fill="#b3b3b3"/></svg>
<div class="hd" style="left:60.0px;top:417px;width:50.0px;color:#262626">A</div>
<div class="a" style="left:109.4px;top:424.0px;width:1.2px;height:34.0px;background:#c4c4c4;"></div>
<div class="hd" style="left:110.0px;top:417px;width:119.3px;color:#262626">B</div>
<div class="a" style="left:228.7px;top:424.0px;width:1.2px;height:34.0px;background:#c4c4c4;"></div>
<div class="hd" style="left:229.3px;top:417px;width:204.3px;color:#2d6e4c">C</div>
<div class="a" style="left:433.0px;top:424.0px;width:1.2px;height:34.0px;background:#c4c4c4;"></div>
<div class="hd" style="left:433.6px;top:417px;width:164.9px;color:#262626">D</div>
<div class="a" style="left:597.9px;top:424.0px;width:1.2px;height:34.0px;background:#c4c4c4;"></div>
<div class="hd" style="left:598.5px;top:417px;width:131.0px;color:#262626">E</div>
<div class="a" style="left:728.9px;top:424.0px;width:1.2px;height:34.0px;background:#c4c4c4;"></div>
<div class="hd" style="left:729.5px;top:417px;width:132.0px;color:#262626">F</div>
<div class="a" style="left:860.9px;top:424.0px;width:1.2px;height:34.0px;background:#c4c4c4;"></div>
<div class="hd" style="left:861.5px;top:417px;width:189.0px;color:#262626">G</div>
<div class="a" style="left:1049.9px;top:424.0px;width:1.2px;height:34.0px;background:#c4c4c4;"></div>
<div class="hd" style="left:1050.5px;top:417px;width:32.5px;color:#262626">H</div>
<div class="a" style="left:1082.4px;top:424.0px;width:1.2px;height:34.0px;background:#c4c4c4;"></div>
<div class="hd" style="left:1083.0px;top:417px;width:108.5px;color:#262626">I</div>
<div class="a" style="left:1190.9px;top:424.0px;width:1.2px;height:34.0px;background:#c4c4c4;"></div>
<div class="hd" style="left:1191.5px;top:417px;width:107.5px;color:#262626">J</div>
<div class="a" style="left:1298.4px;top:424.0px;width:1.2px;height:34.0px;background:#c4c4c4;"></div>
<div class="hd" style="left:1299.0px;top:417px;width:142.0px;color:#262626">K</div>
<div class="a" style="left:1440.4px;top:424.0px;width:1.2px;height:34.0px;background:#c4c4c4;"></div>
<div class="hd" style="left:1441.0px;top:417px;width:141.3px;color:#262626">L</div>
<div class="a" style="left:1581.7px;top:424.0px;width:1.2px;height:34.0px;background:#c4c4c4;"></div>
<div class="hd" style="left:1582.3px;top:417px;width:141.2px;color:#262626">M</div>
<div class="a" style="left:1722.9px;top:424.0px;width:1.2px;height:34.0px;background:#c4c4c4;"></div>
<div class="hd" style="left:1723.5px;top:417px;width:141.3px;color:#262626">N</div>
<div class="a" style="left:1864.2px;top:424.0px;width:1.2px;height:34.0px;background:#c4c4c4;"></div>
<div class="hd" style="left:1864.8px;top:417px;width:141.5px;color:#262626">O</div>
<div class="a" style="left:2005.7px;top:424.0px;width:1.2px;height:34.0px;background:#c4c4c4;"></div>
<div class="hd" style="left:2006.3px;top:417px;width:141.2px;color:#262626">P</div>
<div class="a" style="left:2146.9px;top:424.0px;width:1.2px;height:34.0px;background:#c4c4c4;"></div>
<div class="hd" style="left:2147.5px;top:417px;width:141.5px;color:#262626">Q</div>
<div class="a" style="left:2288.4px;top:424.0px;width:1.2px;height:34.0px;background:#c4c4c4;"></div>
<div class="a" style="left:59.4px;top:424.0px;width:1.2px;height:34.0px;background:#c4c4c4;"></div>
<div class="a" style="left:2.5px;top:457.7px;width:57.5px;height:635.3px;background:#e6e6e6;"></div>
<div class="a" style="left:2.5px;top:543.8px;width:57.5px;height:516.7px;background:#d2d2d2;"></div>
<div class="a" style="left:57.8px;top:543.8px;width:2.2px;height:516.7px;background:#2f7a55;"></div>
<div class="a" style="left:59.6px;top:457.7px;width:1.0px;height:635.3px;background:#9e9e9e;"></div>
<div class="hd" style="left:2.5px;top:458.0px;width:56px;color:#262626;line-height:43px">1</div>
<div class="a" style="left:2.5px;top:500.1px;width:57.0px;height:1.2px;background:#c8c8c8;"></div>
<div class="hd" style="left:2.5px;top:501.1px;width:56px;color:#262626;line-height:43px">2</div>
<div class="a" style="left:2.5px;top:543.2px;width:57.0px;height:1.2px;background:#c8c8c8;"></div>
<div class="hd" style="left:2.5px;top:544.1px;width:56px;color:#2d6e4c;line-height:43px">3</div>
<div class="a" style="left:2.5px;top:586.2px;width:57.0px;height:1.2px;background:#b9b9b9;"></div>
<div class="hd" style="left:2.5px;top:587.2px;width:56px;color:#2d6e4c;line-height:43px">4</div>
<div class="a" style="left:2.5px;top:629.3px;width:57.0px;height:1.2px;background:#b9b9b9;"></div>
<div class="hd" style="left:2.5px;top:630.2px;width:56px;color:#2d6e4c;line-height:43px">5</div>
<div class="a" style="left:2.5px;top:672.3px;width:57.0px;height:1.2px;background:#b9b9b9;"></div>
<div class="hd" style="left:2.5px;top:673.3px;width:56px;color:#2d6e4c;line-height:43px">6</div>
<div class="a" style="left:2.5px;top:715.4px;width:57.0px;height:1.2px;background:#b9b9b9;"></div>
<div class="hd" style="left:2.5px;top:716.4px;width:56px;color:#2d6e4c;line-height:43px">7</div>
<div class="a" style="left:2.5px;top:758.5px;width:57.0px;height:1.2px;background:#b9b9b9;"></div>
<div class="hd" style="left:2.5px;top:759.4px;width:56px;color:#2d6e4c;line-height:43px">8</div>
<div class="a" style="left:2.5px;top:801.5px;width:57.0px;height:1.2px;background:#b9b9b9;"></div>
<div class="hd" style="left:2.5px;top:802.5px;width:56px;color:#2d6e4c;line-height:43px">9</div>
<div class="a" style="left:2.5px;top:844.6px;width:57.0px;height:1.2px;background:#b9b9b9;"></div>
<div class="hd" style="left:2.5px;top:845.5px;width:56px;color:#2d6e4c;line-height:43px">10</div>
<div class="a" style="left:2.5px;top:887.6px;width:57.0px;height:1.2px;background:#b9b9b9;"></div>
<div class="hd" style="left:2.5px;top:888.6px;width:56px;color:#2d6e4c;line-height:43px">11</div>
<div class="a" style="left:2.5px;top:930.7px;width:57.0px;height:1.2px;background:#b9b9b9;"></div>
<div class="hd" style="left:2.5px;top:931.7px;width:56px;color:#2d6e4c;line-height:43px">12</div>
<div class="a" style="left:2.5px;top:973.8px;width:57.0px;height:1.2px;background:#b9b9b9;"></div>
<div class="hd" style="left:2.5px;top:974.7px;width:56px;color:#2d6e4c;line-height:43px">13</div>
<div class="a" style="left:2.5px;top:1016.8px;width:57.0px;height:1.2px;background:#b9b9b9;"></div>
<div class="hd" style="left:2.5px;top:1017.8px;width:56px;color:#2d6e4c;line-height:43px">14</div>
<div class="a" style="left:2.5px;top:1059.9px;width:57.0px;height:1.2px;background:#b9b9b9;"></div>
<div class="hd" style="left:2.5px;top:1060.8px;width:56px;color:#262626;line-height:43px">15</div>
<div class="a" style="left:109.4px;top:457.7px;width:1.2px;height:635.3px;background:#d9d9d9;"></div>
<div class="a" style="left:228.7px;top:457.7px;width:1.2px;height:635.3px;background:#d9d9d9;"></div>
<div class="a" style="left:433.0px;top:457.7px;width:1.2px;height:635.3px;background:#d9d9d9;"></div>
<div class="a" style="left:597.9px;top:457.7px;width:1.2px;height:635.3px;background:#d9d9d9;"></div>
<div class="a" style="left:728.9px;top:457.7px;width:1.2px;height:635.3px;background:#d9d9d9;"></div>
<div class="a" style="left:860.9px;top:457.7px;width:1.2px;height:635.3px;background:#d9d9d9;"></div>
<div class="a" style="left:1049.9px;top:457.7px;width:1.2px;height:635.3px;background:#d9d9d9;"></div>
<div class="a" style="left:1082.4px;top:457.7px;width:1.2px;height:635.3px;background:#d9d9d9;"></div>
<div class="a" style="left:1190.9px;top:457.7px;width:1.2px;height:635.3px;background:#d9d9d9;"></div>
<div class="a" style="left:1298.4px;top:457.7px;width:1.2px;height:635.3px;background:#d9d9d9;"></div>
<div class="a" style="left:1440.4px;top:457.7px;width:1.2px;height:635.3px;background:#d9d9d9;"></div>
<div class="a" style="left:1581.7px;top:457.7px;width:1.2px;height:635.3px;background:#d9d9d9;"></div>
<div class="a" style="left:1722.9px;top:457.7px;width:1.2px;height:635.3px;background:#d9d9d9;"></div>
<div class="a" style="left:1864.2px;top:457.7px;width:1.2px;height:635.3px;background:#d9d9d9;"></div>
<div class="a" style="left:2005.7px;top:457.7px;width:1.2px;height:635.3px;background:#d9d9d9;"></div>
<div class="a" style="left:2146.9px;top:457.7px;width:1.2px;height:635.3px;background:#d9d9d9;"></div>
<div class="a" style="left:2288.4px;top:457.7px;width:1.2px;height:635.3px;background:#d9d9d9;"></div>
<div class="a" style="left:2337.4px;top:457.7px;width:1.2px;height:635.3px;background:#d9d9d9;"></div>
<div class="a" style="left:60.0px;top:500.1px;width:2278.0px;height:1.2px;background:#d9d9d9;"></div>
<div class="a" style="left:60.0px;top:543.2px;width:2278.0px;height:1.2px;background:#d9d9d9;"></div>
<div class="a" style="left:60.0px;top:586.2px;width:2278.0px;height:1.2px;background:#d9d9d9;"></div>
<div class="a" style="left:60.0px;top:629.3px;width:2278.0px;height:1.2px;background:#d9d9d9;"></div>
<div class="a" style="left:60.0px;top:672.3px;width:2278.0px;height:1.2px;background:#d9d9d9;"></div>
<div class="a" style="left:60.0px;top:715.4px;width:2278.0px;height:1.2px;background:#d9d9d9;"></div>
<div class="a" style="left:60.0px;top:758.5px;width:2278.0px;height:1.2px;background:#d9d9d9;"></div>
<div class="a" style="left:60.0px;top:801.5px;width:2278.0px;height:1.2px;background:#d9d9d9;"></div>
<div class="a" style="left:60.0px;top:844.6px;width:2278.0px;height:1.2px;background:#d9d9d9;"></div>
<div class="a" style="left:60.0px;top:887.6px;width:2278.0px;height:1.2px;background:#d9d9d9;"></div>
<div class="a" style="left:60.0px;top:930.7px;width:2278.0px;height:1.2px;background:#d9d9d9;"></div>
<div class="a" style="left:60.0px;top:973.8px;width:2278.0px;height:1.2px;background:#d9d9d9;"></div>
<div class="a" style="left:60.0px;top:1016.8px;width:2278.0px;height:1.2px;background:#d9d9d9;"></div>
<div class="a" style="left:60.0px;top:1059.9px;width:2278.0px;height:1.2px;background:#d9d9d9;"></div>
<div class="a" style="left:2337.4px;top:457.5px;width:1.2px;height:635.5px;background:#c2c2c2;"></div>
<div class="a" style="left:2.5px;top:1092.4px;width:2336.0px;height:1.4px;background:#9e9e9e;"></div>
<div class="a" style="left:110.0px;top:500.8px;width:940.5px;height:43.0px;background:#d9d9d9;"></div>
<div class="a" style="left:229.3px;top:586.9px;width:204.3px;height:473.7px;background:#c8c8c8;"></div>
<div class="cell" style="left:110.0px;top:501.3px;width:119.3px;text-align:center;font-size:30px;letter-spacing:.25px">동</div>
<div class="cell" style="left:229.3px;top:501.3px;width:204.3px;text-align:center;font-size:30px;letter-spacing:.25px">호</div>
<div class="cell" style="left:433.6px;top:501.3px;width:164.9px;text-align:center;font-size:30px;letter-spacing:.25px">기본관리비</div>
<div class="cell" style="left:598.5px;top:501.3px;width:131.0px;text-align:center;font-size:30px;letter-spacing:.25px">청소비</div>
<div class="cell" style="left:729.5px;top:501.3px;width:132.0px;text-align:center;font-size:30px;letter-spacing:.25px">수도비</div>
<div class="cell" style="left:861.5px;top:501.3px;width:189.0px;text-align:center;font-size:30px;letter-spacing:.25px">도시가스비</div>
<div class="cell" style="left:110.0px;top:543.3px;width:119.3px;text-align:center">101</div>
<div class="cell" style="left:229.3px;top:543.3px;width:204.3px;text-align:center">1501</div>
<div class="cell" style="left:433.6px;top:543.3px;width:164.9px;text-align:right;padding-right:16.5px">15,000</div>
<div class="cell" style="left:598.5px;top:543.3px;width:131.0px;text-align:right;padding-right:16.5px">5,530</div>
<div class="cell" style="left:729.5px;top:543.3px;width:132.0px;text-align:right;padding-right:16.5px">25,310</div>
<div class="cell" style="left:861.5px;top:543.3px;width:189.0px;text-align:right;padding-right:16.5px">156,000</div>
<div class="cell" style="left:110.0px;top:586.4px;width:119.3px;text-align:center">101</div>
<div class="cell" style="left:229.3px;top:586.4px;width:204.3px;text-align:center">61054</div>
<div class="cell" style="left:433.6px;top:586.4px;width:164.9px;text-align:right;padding-right:16.5px">22,000</div>
<div class="cell" style="left:598.5px;top:586.4px;width:131.0px;text-align:right;padding-right:16.5px">4,950</div>
<div class="cell" style="left:729.5px;top:586.4px;width:132.0px;text-align:right;padding-right:16.5px">32,150</div>
<div class="cell" style="left:861.5px;top:586.4px;width:189.0px;text-align:right;padding-right:16.5px">354,000</div>
<div class="cell" style="left:110.0px;top:629.4px;width:119.3px;text-align:center">101</div>
<div class="cell" style="left:229.3px;top:629.4px;width:204.3px;text-align:center">2512</div>
<div class="cell" style="left:433.6px;top:629.4px;width:164.9px;text-align:right;padding-right:16.5px">15,000</div>
<div class="cell" style="left:598.5px;top:629.4px;width:131.0px;text-align:right;padding-right:16.5px">4,520</div>
<div class="cell" style="left:729.5px;top:629.4px;width:132.0px;text-align:right;padding-right:16.5px">6,501</div>
<div class="cell" style="left:861.5px;top:629.4px;width:189.0px;text-align:right;padding-right:16.5px">154,000</div>
<div class="cell" style="left:110.0px;top:672.5px;width:119.3px;text-align:center">101</div>
<div class="cell" style="left:229.3px;top:672.5px;width:204.3px;text-align:center">51803</div>
<div class="cell" style="left:433.6px;top:672.5px;width:164.9px;text-align:right;padding-right:16.5px">22,000</div>
<div class="cell" style="left:598.5px;top:672.5px;width:131.0px;text-align:right;padding-right:16.5px">6,500</div>
<div class="cell" style="left:729.5px;top:672.5px;width:132.0px;text-align:right;padding-right:16.5px">41,050</div>
<div class="cell" style="left:861.5px;top:672.5px;width:189.0px;text-align:right;padding-right:16.5px">251,000</div>
<div class="cell" style="left:110.0px;top:715.6px;width:119.3px;text-align:center">101</div>
<div class="cell" style="left:229.3px;top:715.6px;width:204.3px;text-align:center">51234</div>
<div class="cell" style="left:433.6px;top:715.6px;width:164.9px;text-align:right;padding-right:16.5px">22,000</div>
<div class="cell" style="left:598.5px;top:715.6px;width:131.0px;text-align:right;padding-right:16.5px">7,500</div>
<div class="cell" style="left:729.5px;top:715.6px;width:132.0px;text-align:right;padding-right:16.5px">35,400</div>
<div class="cell" style="left:861.5px;top:715.6px;width:189.0px;text-align:right;padding-right:16.5px">420,150</div>
<div class="cell" style="left:110.0px;top:758.6px;width:119.3px;text-align:center">101</div>
<div class="cell" style="left:229.3px;top:758.6px;width:204.3px;text-align:center">2101</div>
<div class="cell" style="left:433.6px;top:758.6px;width:164.9px;text-align:right;padding-right:16.5px">15,000</div>
<div class="cell" style="left:598.5px;top:758.6px;width:131.0px;text-align:right;padding-right:16.5px">6,540</div>
<div class="cell" style="left:729.5px;top:758.6px;width:132.0px;text-align:right;padding-right:16.5px">34,150</div>
<div class="cell" style="left:861.5px;top:758.6px;width:189.0px;text-align:right;padding-right:16.5px">95,400</div>
<div class="cell" style="left:110.0px;top:801.7px;width:119.3px;text-align:center">101</div>
<div class="cell" style="left:229.3px;top:801.7px;width:204.3px;text-align:center">3151</div>
<div class="cell" style="left:433.6px;top:801.7px;width:164.9px;text-align:right;padding-right:16.5px">15,000</div>
<div class="cell" style="left:598.5px;top:801.7px;width:131.0px;text-align:right;padding-right:16.5px">3,590</div>
<div class="cell" style="left:729.5px;top:801.7px;width:132.0px;text-align:right;padding-right:16.5px">29,540</div>
<div class="cell" style="left:861.5px;top:801.7px;width:189.0px;text-align:right;padding-right:16.5px">54,021</div>
<div class="cell" style="left:110.0px;top:844.7px;width:119.3px;text-align:center">101</div>
<div class="cell" style="left:229.3px;top:844.7px;width:204.3px;text-align:center">92002</div>
<div class="cell" style="left:433.6px;top:844.7px;width:164.9px;text-align:right;padding-right:16.5px">22,000</div>
<div class="cell" style="left:598.5px;top:844.7px;width:131.0px;text-align:right;padding-right:16.5px">5,460</div>
<div class="cell" style="left:729.5px;top:844.7px;width:132.0px;text-align:right;padding-right:16.5px">31,200</div>
<div class="cell" style="left:861.5px;top:844.7px;width:189.0px;text-align:right;padding-right:16.5px">184,500</div>
<div class="cell" style="left:110.0px;top:887.8px;width:119.3px;text-align:center">102</div>
<div class="cell" style="left:229.3px;top:887.8px;width:204.3px;text-align:center">52301</div>
<div class="cell" style="left:433.6px;top:887.8px;width:164.9px;text-align:right;padding-right:16.5px">22,000</div>
<div class="cell" style="left:598.5px;top:887.8px;width:131.0px;text-align:right;padding-right:16.5px">3,580</div>
<div class="cell" style="left:729.5px;top:887.8px;width:132.0px;text-align:right;padding-right:16.5px">9,530</div>
<div class="cell" style="left:861.5px;top:887.8px;width:189.0px;text-align:right;padding-right:16.5px">220,300</div>
<div class="cell" style="left:110.0px;top:930.9px;width:119.3px;text-align:center">102</div>
<div class="cell" style="left:229.3px;top:930.9px;width:204.3px;text-align:center">2135</div>
<div class="cell" style="left:433.6px;top:930.9px;width:164.9px;text-align:right;padding-right:16.5px">15,000</div>
<div class="cell" style="left:598.5px;top:930.9px;width:131.0px;text-align:right;padding-right:16.5px">4,560</div>
<div class="cell" style="left:729.5px;top:930.9px;width:132.0px;text-align:right;padding-right:16.5px">19,540</div>
<div class="cell" style="left:861.5px;top:930.9px;width:189.0px;text-align:right;padding-right:16.5px">123,010</div>
<div class="cell" style="left:110.0px;top:973.9px;width:119.3px;text-align:center">102</div>
<div class="cell" style="left:229.3px;top:973.9px;width:204.3px;text-align:center">1245</div>
<div class="cell" style="left:433.6px;top:973.9px;width:164.9px;text-align:right;padding-right:16.5px">15,000</div>
<div class="cell" style="left:598.5px;top:973.9px;width:131.0px;text-align:right;padding-right:16.5px">5,120</div>
<div class="cell" style="left:729.5px;top:973.9px;width:132.0px;text-align:right;padding-right:16.5px">32,100</div>
<div class="cell" style="left:861.5px;top:973.9px;width:189.0px;text-align:right;padding-right:16.5px">201,030</div>
<div class="cell" style="left:110.0px;top:1017.0px;width:119.3px;text-align:center">102</div>
<div class="cell" style="left:229.3px;top:1017.0px;width:204.3px;text-align:center">81804</div>
<div class="cell" style="left:433.6px;top:1017.0px;width:164.9px;text-align:right;padding-right:16.5px">22,000</div>
<div class="cell" style="left:598.5px;top:1017.0px;width:131.0px;text-align:right;padding-right:16.5px">95,400</div>
<div class="cell" style="left:729.5px;top:1017.0px;width:132.0px;text-align:right;padding-right:16.5px">8,450</div>
<div class="cell" style="left:861.5px;top:1017.0px;width:189.0px;text-align:right;padding-right:16.5px">200,100</div>
<div class="a" style="left:109.0px;top:499.8px;width:942.5px;height:2.0px;background:#4d4d4d;"></div>
<div class="a" style="left:109.0px;top:542.8px;width:942.5px;height:2.0px;background:#4d4d4d;"></div>
<div class="a" style="left:109.0px;top:585.9px;width:942.5px;height:2.0px;background:#4d4d4d;"></div>
<div class="a" style="left:109.0px;top:628.9px;width:942.5px;height:2.0px;background:#4d4d4d;"></div>
<div class="a" style="left:109.0px;top:672.0px;width:942.5px;height:2.0px;background:#4d4d4d;"></div>
<div class="a" style="left:109.0px;top:715.1px;width:942.5px;height:2.0px;background:#4d4d4d;"></div>
<div class="a" style="left:109.0px;top:758.1px;width:942.5px;height:2.0px;background:#4d4d4d;"></div>
<div class="a" style="left:109.0px;top:801.2px;width:942.5px;height:2.0px;background:#4d4d4d;"></div>
<div class="a" style="left:109.0px;top:844.2px;width:942.5px;height:2.0px;background:#4d4d4d;"></div>
<div class="a" style="left:109.0px;top:887.3px;width:942.5px;height:2.0px;background:#4d4d4d;"></div>
<div class="a" style="left:109.0px;top:930.4px;width:942.5px;height:2.0px;background:#4d4d4d;"></div>
<div class="a" style="left:109.0px;top:973.4px;width:942.5px;height:2.0px;background:#4d4d4d;"></div>
<div class="a" style="left:109.0px;top:1016.5px;width:942.5px;height:2.0px;background:#4d4d4d;"></div>
<div class="a" style="left:109.0px;top:1059.5px;width:942.5px;height:2.0px;background:#4d4d4d;"></div>
<div class="a" style="left:109.0px;top:499.8px;width:2.0px;height:561.8px;background:#4d4d4d;"></div>
<div class="a" style="left:228.3px;top:499.8px;width:2.0px;height:561.8px;background:#4d4d4d;"></div>
<div class="a" style="left:432.6px;top:499.8px;width:2.0px;height:561.8px;background:#4d4d4d;"></div>
<div class="a" style="left:597.5px;top:499.8px;width:2.0px;height:561.8px;background:#4d4d4d;"></div>
<div class="a" style="left:728.5px;top:499.8px;width:2.0px;height:561.8px;background:#4d4d4d;"></div>
<div class="a" style="left:860.5px;top:499.8px;width:2.0px;height:561.8px;background:#4d4d4d;"></div>
<div class="a" style="left:1049.5px;top:499.8px;width:2.0px;height:561.8px;background:#4d4d4d;"></div>
<div class="a" style="left:227.3px;top:542.2px;width:208.0px;height:519.9px;border:2.4px solid #2f7a55;"></div>
<div class="a" style="left:230.3px;top:545.2px;width:202.0px;height:513.9px;border:1px solid rgba(255,255,255,.55);"></div>
<div class="a" style="left:429.5px;top:1057.0px;width:7.0px;height:7.0px;background:#1f7246;border:1px solid #fff;"></div>
<svg class="a" style="left:1083.5px;top:498.8px" width="216.5" height="88.2" viewBox="0 0 216.5 88.2"><rect x="0" y="0" width="216.5" height="88.2" fill="#6a97d3"/><path d="M0 0H216.5L205.0 11.5H11.5Z" fill="#86ade0"/><path d="M0 0V88.2L11.5 76.7V11.5Z" fill="#9fbfea"/><path d="M216.5 0V88.2L205.0 76.7V11.5Z" fill="#3f6395"/><path d="M0 88.2H216.5L205.0 76.7H11.5Z" fill="#5079ae"/><rect x="11.5" y="11.5" width="193.5" height="65.2" fill="none" stroke="#4f7db8" stroke-width="1"/><rect x=".6" y=".6" width="215.3" height="87.0" fill="none" stroke="#41719c" stroke-width="1.2"/></svg>
<div class="a" style="left:2338.5px;top:415.5px;width:21.5px;height:677.5px;background:#e6e6e6;"></div>
<div class="a" style="left:2342.0px;top:436.0px;width:18.0px;height:640.0px;background:#fff;"></div>
<div class="a" style="left:2342.0px;top:881.5px;width:18.0px;height:193.5px;background:#c9c9c9;"></div>
<div class="a" style="left:2342.0px;top:419.0px;width:18.0px;height:16.0px;background:#fff;border:1px solid #d0d0d0;"></div>
<div class="a" style="left:2346.5px;top:424px;border-left:4.5px solid transparent;border-right:4.5px solid transparent;border-bottom:5px solid #777"></div>
<div class="a" style="left:2342.0px;top:1076.5px;width:18.0px;height:16.5px;background:#fff;border:1px solid #d0d0d0;"></div>
<div class="a" style="left:2346.5px;top:1083px;border-left:4.5px solid transparent;border-right:4.5px solid transparent;border-top:5px solid #555"></div>
<svg class="a" style="left:33.0px;top:1104.0px;" width="8" height="11" viewBox="0 0 8 11"><path d="M7 0L1 5.5L7 11Z" fill="#c6c6c6"/></svg>
<svg class="a" style="left:68.0px;top:1104.0px;" width="8" height="11" viewBox="0 0 8 11"><path d="M1 0L7 5.5L1 11Z" fill="#c6c6c6"/></svg>
<div class="a" style="left:124.3px;top:1098.0px;width:1.3px;height:24.0px;background:#ababab;"></div>
<div class="t" style="top:1100.9px;font-size:16.6px;color:#555;left:139.5px;letter-spacing:0.62px;">무작정따라하기</div>
<div class="a" style="left:266.0px;top:1098.0px;width:1.3px;height:24.0px;background:#ababab;"></div>
<div class="t" style="top:1100.9px;font-size:16.6px;color:#555;left:282.0px;letter-spacing:-0.12px;">기출01</div>
<div class="a" style="left:347.5px;top:1093.5px;width:79.5px;height:30.5px;background:#fff;"></div>
<div class="a" style="left:347.5px;top:1121.0px;width:79.5px;height:3.0px;background:#1f7246;"></div>
<div class="t" style="top:1100.4px;font-size:16.6px;color:#1f7246;left:363.5px;letter-spacing:0.07px;">기출02</div>
<svg class="a" style="left:468.0px;top:1100.0px;" width="20" height="20" viewBox="0 0 20 20"><circle cx="10" cy="10" r="8.6" fill="none" stroke="#777" stroke-width="1.3"/><path d="M10 5.5V14.5M5.5 10H14.5" stroke="#777" stroke-width="1.3"/></svg>
<div class="a" style="left:1418.5px;top:1103.0px;width:1.6px;height:1.6px;background:#aaa;"></div>
<div class="a" style="left:1418.5px;top:1108.0px;width:1.6px;height:1.6px;background:#aaa;"></div>
<div class="a" style="left:1418.5px;top:1113.0px;width:1.6px;height:1.6px;background:#aaa;"></div>
<div class="a" style="left:1439.5px;top:1102.0px;width:898.0px;height:17.6px;background:#dcdcdc;"></div>
<div class="a" style="left:1439.5px;top:1102.0px;width:17.5px;height:17.6px;background:#fff;border:1px solid #cfcfcf;"></div>
<div class="a" style="left:1445px;top:1106.5px;border-top:4.5px solid transparent;border-bottom:4.5px solid transparent;border-right:5px solid #555"></div>
<div class="a" style="left:1457.0px;top:1102.0px;width:809.5px;height:17.6px;background:#fff;border:1px solid #cfcfcf;"></div>
<div class="a" style="left:2320.5px;top:1102.0px;width:17.0px;height:17.6px;background:#fff;border:1px solid #cfcfcf;"></div>
<div class="a" style="left:2327px;top:1106.5px;border-top:4.5px solid transparent;border-bottom:4.5px solid transparent;border-left:5px solid #555"></div>
<div class="t" style="top:1133.0px;font-size:15.3px;color:#666;left:11.0px;letter-spacing:0.67px;">준비</div>
<div class="a" style="left:65.0px;top:1133.0px;width:15.0px;height:14.0px;border:1.4px solid #7b7b7b;border-radius:2px;"></div>
<div class="t" style="top:1133.0px;font-size:15.3px;color:#777;left:1643.5px;letter-spacing:0.11px;">평균: 33570.25</div>
<div class="t" style="top:1133.0px;font-size:15.3px;color:#777;left:1790.5px;letter-spacing:0.29px;">개수: 12</div>
<div class="t" style="top:1133.0px;font-size:15.3px;color:#777;left:1865.5px;letter-spacing:0.18px;">합계: 402843</div>
<div class="a" style="left:1976.5px;top:1128.0px;width:48.0px;height:26.0px;background:#c8c8c8;"></div>
<svg class="a" style="left:1992.0px;top:1132.5px;" width="17" height="15" viewBox="0 0 17 15"><rect x=".8" y=".8" width="15.4" height="13.4" fill="none" stroke="#555" stroke-width="1.5"/><path d="M6 0V15M11 0V15M0 5.3H17M0 9.9H17" stroke="#555" stroke-width="1.3"/></svg>
<svg class="a" style="left:2041.5px;top:1132.5px;" width="18" height="15" viewBox="0 0 18 15"><rect x=".8" y=".8" width="16.4" height="13.4" fill="none" stroke="#666" stroke-width="1.5"/><rect x="5" y="3.5" width="8" height="8.5" fill="none" stroke="#666" stroke-width="1.2"/></svg>
<svg class="a" style="left:2091.0px;top:1132.5px;" width="18" height="15" viewBox="0 0 18 15"><rect x=".8" y=".8" width="16.4" height="13.4" fill="none" stroke="#666" stroke-width="1.5"/><path d="M6 0V8H12V0M9 0V8" stroke="#666" stroke-width="1.2" fill="none"/></svg>
<div class="a" style="left:2131.5px;top:1140.8px;width:9.5px;height:1.6px;background:#777;"></div>
<div class="a" style="left:2148.0px;top:1141.0px;width:122.0px;height:1.3px;background:#8a8a8a;"></div>
<div class="a" style="left:2209.0px;top:1137.0px;width:1.4px;height:9.0px;background:#777;"></div>
<div class="a" style="left:2217.7px;top:1135.0px;width:5.3px;height:13.0px;background:#6b6b6b;"></div>
<div class="a" style="left:2276.0px;top:1140.8px;width:9.6px;height:1.6px;background:#777;"></div>
<div class="a" style="left:2280.0px;top:1136.8px;width:1.6px;height:9.6px;background:#777;"></div>
<div class="t" style="top:1133.2px;font-size:15.3px;color:#777;left:2303.0px;letter-spacing:-0.26px;">160%</div>
<div class="a" style="left:1315.5px;top:293.5px;width:669.5px;height:682.0px;background:#f0f0f0;border:1.2px solid #8e8e8e;box-shadow:0 6px 22px 4px rgba(0,0,0,.33),0 0 3px rgba(0,0,0,.35);"></div>
<div class="a" style="left:1316.7px;top:294.7px;width:667.1px;height:37.0px;background:#fff;"></div>
<div class="t" style="top:305.4px;font-size:15.5px;color:#333;left:1328.0px;letter-spacing:0.13px;">셀 서식</div>
<div class="t" style="top:303.2px;font-size:16px;color:#333;left:1896.5px;font-weight:bold;">?</div>
<svg class="a" style="left:1948.5px;top:304.5px;" width="14" height="14" viewBox="0 0 14 14"><path d="M1 1L13 13M13 1L1 13" stroke="#333" stroke-width="1.6" fill="none"/></svg>
<div class="a" style="left:1410.6px;top:344.0px;width:66.4px;height:28.0px;background:#f0f0f0;border:1px solid #d9d9d9;border-bottom:none;"></div>
<div class="t" style="top:350.4px;font-size:15.5px;color:#3a3a3a;left:1143.3px;width:600px;text-align:center;letter-spacing:0.23px;">맞춤</div>
<div class="a" style="left:1476.0px;top:344.0px;width:67.0px;height:28.0px;background:#f0f0f0;border:1px solid #d9d9d9;border-bottom:none;"></div>
<div class="t" style="top:350.4px;font-size:15.5px;color:#3a3a3a;left:1209.0px;width:600px;text-align:center;letter-spacing:0.18px;">글꼴</div>
<div class="a" style="left:1542.0px;top:344.0px;width:68.0px;height:28.0px;background:#f0f0f0;border:1px solid #d9d9d9;border-bottom:none;"></div>
<div class="t" style="top:350.4px;font-size:15.5px;color:#3a3a3a;left:1275.5px;width:600px;text-align:center;letter-spacing:0.57px;">테두리</div>
<div class="a" style="left:1609.0px;top:344.0px;width:66.5px;height:28.0px;background:#f0f0f0;border:1px solid #d9d9d9;border-bottom:none;"></div>
<div class="t" style="top:350.4px;font-size:15.5px;color:#3a3a3a;left:1341.8px;width:600px;text-align:center;letter-spacing:0.34px;">채우기</div>
<div class="a" style="left:1674.5px;top:344.0px;width:66.5px;height:28.0px;background:#f0f0f0;border:1px solid #d9d9d9;border-bottom:none;"></div>
<div class="t" style="top:350.4px;font-size:15.5px;color:#3a3a3a;left:1407.2px;width:600px;text-align:center;letter-spacing:-0.02px;">보호</div>
<div class="a" style="left:1325.5px;top:371.0px;width:647.5px;height:548.5px;background:#fff;border:1px solid #d9d9d9;"></div>
<div class="a" style="left:1325.5px;top:342.0px;width:86.0px;height:31.0px;background:#fff;border:1px solid #d9d9d9;border-bottom:none;"></div>
<div class="t" style="top:347.9px;font-size:15.5px;color:#3a3a3a;left:1335.0px;letter-spacing:0.59px;">표시 형식</div>
<div class="t" style="top:385.9px;font-size:15.5px;color:#3a3a3a;left:1336.0px;letter-spacing:-0.26px;">범주(C):</div>
<div class="a" style="left:1365.5px;top:401.3px;width:9.5px;height:1.2px;background:#3a3a3a;"></div>
<div class="a" style="left:1335.0px;top:407.5px;width:150.0px;height:391.0px;background:#fff;border:1.2px solid #7a7a7a;"></div>
<div class="a" style="left:1463.0px;top:409.0px;width:20.5px;height:388.0px;background:#f0f0f0;"></div>
<svg class="a" style="left:1467.5px;top:417.0px;" width="11" height="7" viewBox="0 0 11 7"><path d="M1 6L5.5 1.5L10 6" stroke="#c0c0c0" stroke-width="1.5" fill="none"/></svg>
<svg class="a" style="left:1467.5px;top:783.5px;" width="11" height="7" viewBox="0 0 11 7"><path d="M1 1L5.5 5.5L10 1" stroke="#c0c0c0" stroke-width="1.5" fill="none"/></svg>
<div class="t" style="top:411.4px;font-size:15.5px;color:#3a3a3a;left:1341.0px;letter-spacing:-0.02px;">일반</div>
<div class="t" style="top:429.9px;font-size:15.5px;color:#3a3a3a;left:1341.0px;letter-spacing:-0.02px;">숫자</div>
<div class="t" style="top:448.3px;font-size:15.5px;color:#3a3a3a;left:1341.0px;letter-spacing:-0.02px;">통화</div>
<div class="t" style="top:466.8px;font-size:15.5px;color:#3a3a3a;left:1341.0px;letter-spacing:-0.02px;">회계</div>
<div class="t" style="top:485.2px;font-size:15.5px;color:#3a3a3a;left:1341.0px;letter-spacing:-0.02px;">날짜</div>
<div class="t" style="top:503.7px;font-size:15.5px;color:#3a3a3a;left:1341.0px;letter-spacing:-0.02px;">시간</div>
<div class="t" style="top:522.1px;font-size:15.5px;color:#3a3a3a;left:1341.0px;letter-spacing:0.07px;">백분율</div>
<div class="t" style="top:540.6px;font-size:15.5px;color:#3a3a3a;left:1341.0px;letter-spacing:-0.02px;">분수</div>
<div class="t" style="top:559.0px;font-size:15.5px;color:#3a3a3a;left:1341.0px;letter-spacing:-0.02px;">지수</div>
<div class="t" style="top:577.5px;font-size:15.5px;color:#3a3a3a;left:1341.0px;letter-spacing:0.07px;">텍스트</div>
<div class="t" style="top:595.9px;font-size:15.5px;color:#3a3a3a;left:1341.0px;letter-spacing:-0.02px;">기타</div>
<div class="a" style="left:1337.0px;top:611.5px;width:125.0px;height:18.5px;background:#3390ff;"></div>
<div class="t" style="top:613.9px;font-size:15.5px;color:#fff;left:1341.0px;letter-spacing:0.15px;">사용자 지정</div>
<div class="a" style="left:1496.0px;top:416.0px;width:468.5px;height:44.5px;border:1px solid #dcdcdc;"></div>
<div class="a" style="left:1501.0px;top:408.0px;width:33.0px;height:16.0px;background:#fff;"></div>
<div class="t" style="top:408.9px;font-size:15.5px;color:#3a3a3a;left:1504.0px;letter-spacing:-0.02px;">보기</div>
<div class="t" style="top:436.7px;font-size:15.5px;color:#3a3a3a;left:1507.5px;letter-spacing:0.34px;">1단지 501호</div>
<div class="t" style="top:470.4px;font-size:15.5px;color:#3a3a3a;left:1497.0px;letter-spacing:-0.40px;">형식(T):</div>
<div class="a" style="left:1526.5px;top:486.0px;width:9.0px;height:1.2px;background:#3a3a3a;"></div>
<div class="a" style="left:1495.5px;top:492.0px;width:469.5px;height:28.0px;background:#fff;border:1.2px solid #7a7a7a;"></div>
<div class="t" style="top:498.4px;font-size:15.5px;color:#3a3a3a;left:1501.0px;letter-spacing:0.36px;">[&gt;=10000]#"단지" ####"호";#"단지" ###"호"</div>
<div class="a" style="left:1519.5px;top:517.0px;width:60.5px;height:1.2px;background:#555;"></div>
<div class="a" style="left:1803.0px;top:498.0px;width:1.4px;height:16.0px;background:#222;"></div>
<div class="a" style="left:1495.5px;top:520.8px;width:469.5px;height:224.7px;background:#fff;border:1.2px solid #7a7a7a;"></div>
<div class="a" style="left:1943.0px;top:522.0px;width:21.0px;height:222.0px;background:#f0f0f0;"></div>
<div class="a" style="left:1943.5px;top:544.0px;width:19.5px;height:39.5px;background:#cdcdcd;"></div>
<svg class="a" style="left:1947.5px;top:529.5px;" width="11" height="7" viewBox="0 0 11 7"><path d="M1 6L5.5 1.5L10 6" stroke="#555" stroke-width="1.7" fill="none"/></svg>
<svg class="a" style="left:1947.5px;top:730.0px;" width="11" height="7" viewBox="0 0 11 7"><path d="M1 1L5.5 5.5L10 1" stroke="#555" stroke-width="1.7" fill="none"/></svg>
<div class="t" style="top:524.6px;font-size:15.0px;color:#3a3a3a;left:1501.0px;letter-spacing:0.64px;">G/표준</div>
<div class="t" style="top:543.0px;font-size:15.0px;color:#3a3a3a;left:1501.0px;">0</div>
<div class="t" style="top:561.4px;font-size:15.0px;color:#3a3a3a;left:1501.0px;letter-spacing:0.32px;">0.00</div>
<div class="t" style="top:579.9px;font-size:15.0px;color:#3a3a3a;left:1501.0px;letter-spacing:0.39px;">#,##0</div>
<div class="t" style="top:598.2px;font-size:15.0px;color:#3a3a3a;left:1501.0px;letter-spacing:0.14px;">#,##0.00</div>
<div class="t" style="top:616.6px;font-size:15.0px;color:#3a3a3a;left:1501.0px;letter-spacing:-0.01px;">_-* #,##0_-;-* #,##0_-;_-* "-"_-;_-@_-</div>
<div class="t" style="top:635.0px;font-size:15.0px;color:#3a3a3a;left:1501.0px;letter-spacing:-0.04px;">_-* #,##0.00_-;-* #,##0.00_-;_-* "-"??_-;_-@_-</div>
<div class="t" style="top:653.4px;font-size:15.0px;color:#3a3a3a;left:1501.0px;letter-spacing:-0.22px;">_-₩* #,##0_-;-₩* #,##0_-;_-₩* "-"_-;_-@_-</div>
<div class="t" style="top:671.9px;font-size:15.0px;color:#3a3a3a;left:1501.0px;letter-spacing:-0.22px;">_-₩* #,##0.00_-;-₩* #,##0.00_-;_-₩* "-"??_-;_-@_-</div>
<div class="t" style="top:690.2px;font-size:15.0px;color:#3a3a3a;left:1501.0px;letter-spacing:0.24px;">#,##0;-#,##0</div>
<div class="t" style="top:708.6px;font-size:15.0px;color:#3a3a3a;left:1501.0px;letter-spacing:0.40px;">#,##0;[빨강]-#,##0</div>
<div class="t" style="top:727.0px;font-size:15.0px;color:#3a3a3a;left:1501.0px;letter-spacing:0.16px;">#,##0.00;-#,##0.00</div>
<div class="a" style="left:1873.0px;top:769.0px;width:91.0px;height:30.0px;background:#e1e1e1;border:1px solid #adadad;"></div>
<div class="t" style="top:776.4px;font-size:15.5px;color:#3a3a3a;left:1618.5px;width:600px;text-align:center;letter-spacing:0.19px;">삭제(D)</div>
<div class="a" style="left:1929.0px;top:792.0px;width:9.5px;height:1.2px;background:#3a3a3a;"></div>
<div class="t" style="top:818.4px;font-size:15.5px;color:#3a3a3a;left:1336.0px;letter-spacing:0.50px;">기존의 형식 중 하나를 선택한 후 변형시킵니다.</div>
<div class="a" style="left:1781.5px;top:933.0px;width:91.0px;height:30.5px;background:#e5f1fb;border:1.4px solid #3d8bdb;"></div>
<div class="t" style="top:940.4px;font-size:15.5px;color:#3a3a3a;left:1526.5px;width:600px;text-align:center;letter-spacing:-0.02px;">확인</div>
<div class="a" style="left:1885.0px;top:933.0px;width:91.0px;height:30.5px;background:#e1e1e1;border:1px solid #adadad;"></div>
<div class="t" style="top:940.4px;font-size:15.5px;color:#3a3a3a;left:1630.5px;width:600px;text-align:center;letter-spacing:-0.02px;">취소</div>
<svg class="a" style="left:1838.5px;top:944.0px;" width="17" height="25" viewBox="0 0 17 25"><path d="M1 1V19.5L5.300 15.5L8.600 23L11.800 21.600L8.600 14.300H14.500Z" fill="#fff" stroke="#5d5d5d" stroke-width="1.1" stroke-linejoin="round"/></svg>
<div class="t" style="left:186px;top:1170.4px;font-size:43px;font-weight:bold;color:#3a9ae8;letter-spacing:-3.5px;transform:scaleX(.84);transform-origin:0 50%">1.</div>
<div class="s" style="left:223.6px;top:1172.6px;font-size:39.5px;word-spacing:5px;transform:scaleX(0.8676);">[C<span style="letter-spacing:1.6px">3</span>:C<span style="letter-spacing:1.6px">14</span>] 영역에 사용자 지정 표시 형식을 설정하는 <span style="margin:0 -.1em 0 -.04em">‘</span>서식설정<span style="margin:0 -.06em 0 -.1em">’</span> 매크로를 생성하시오.</div>
<svg class="a" style="left:236.0px;top:1243.0px;" width="24" height="26.5" viewBox="0 0 24 26.5"><path d="M0 0L24 13.2L0 26.5Z" fill="#3d9be9"/></svg>
<div class="s" style="left:289.5px;top:1237.3px;font-size:39.5px;word-spacing:5px;transform:scaleX(0.8843);"><span style="margin:0 -.1em 0 -.04em">‘</span>호<span style="margin:0 -.06em 0 -.1em">’</span>가 <span style="letter-spacing:1.6px">10000</span> 이상이면 단지를 <span style="letter-spacing:1.6px">1</span>자리, 호수를 <span style="letter-spacing:1.6px">4</span>자리로 표시하고, 그 외는 단지를 <span style="letter-spacing:1.6px">1</span>자리, 호수를 <span style="letter-spacing:1.6px">3</span>자리로 표시하시오.</div>
<div class="s" style="left:286.2px;top:1303.2px;font-size:39.5px;word-spacing:5px;transform:scaleX(0.8752);">[표시 예 : <span style="letter-spacing:1.6px">1</span>단지 <span style="letter-spacing:1.6px">501</span>호, <span style="letter-spacing:1.6px">6</span>단지 <span style="letter-spacing:1.6px">1054</span>호]</div>
<svg class="a" style="left:230.0px;top:1369.3px;" width="24" height="27" viewBox="0 0 24 27"><path d="M0 0L24 13.5L0 27Z" fill="#3d9be9"/></svg>
<div class="s" style="left:283.5px;top:1363.3px;font-size:39.5px;word-spacing:5px;transform:scaleX(0.8990);">[도형] → [기본 도형]의 <span style="margin:0 -.1em 0 -.04em">‘</span>빗면<span style="margin:0 -.06em 0 -.1em">’</span>을 동일 시트의 [I<span style="letter-spacing:1.6px">2</span>:J<span style="letter-spacing:1.6px">3</span>] 영역에 생성한 후 텍스트를 <span style="margin:0 -.08em 0 -.04em">“</span>서식적용<span style="margin:0 -.04em 0 -.08em">”</span>으로 입력하고, 단추를 클릭하면</div>
<div class="s" style="left:267.8px;top:1425.1px;font-size:39.5px;word-spacing:5px;transform:scaleX(0.8961);"><span style="margin:0 -.1em 0 -.04em">‘</span>서식적용<span style="margin:0 -.06em 0 -.1em">’</span> 매크로가 실행되도록 설정하시오.</div>
</div>
<div class="a" style="left:0.0px;top:0.0px;width:2360.0px;height:156.0px;background:#000;"></div>
<div class="a" style="left:0.0px;top:1484.0px;width:2360.0px;height:68.0px;background:#000;"></div>
<div class="a" style="left:0.0px;top:1552.0px;width:2360.0px;height:88.0px;background:#fff;"></div>
<svg class="a" style="left:34.0px;top:15.5px;" width="16" height="16" viewBox="0 0 16 16"><path d="M15.5 0.5V15.5L0.8 8Z" fill="#fff"/></svg>
<div class="t" style="top:12.2px;font-size:24.8px;color:#fff;left:58.2px;letter-spacing:0.45px;-webkit-text-stroke:.35px #fff;">GoodNotes</div>
<div class="t" style="top:12.2px;font-size:24.8px;color:#fff;left:209.5px;letter-spacing:0.22px;-webkit-text-stroke:.35px #fff;"><span style="font-size:.9em">오전</span> 11:44</div>
<div class="t" style="top:12.2px;font-size:24.8px;color:#fff;left:340.5px;letter-spacing:0.03px;-webkit-text-stroke:.35px #fff;">12<span style="font-size:.9em">월</span> 27<span style="font-size:.9em">일 수요일</span></div>
<div class="a" style="left:1159.0px;top:19.0px;width:10.0px;height:10.0px;background:#888;border-radius:50%;"></div>
<div class="a" style="left:1175.0px;top:19.0px;width:10.0px;height:10.0px;background:#888;border-radius:50%;"></div>
<div class="a" style="left:1191.0px;top:19.0px;width:10.0px;height:10.0px;background:#888;border-radius:50%;"></div>
<svg class="a" style="left:2180.0px;top:13.5px;" width="29" height="21" viewBox="0 0 29 21"><path d="M14.5 20.5L10.9 16.4A5.3 5.3 0 0 1 18.1 16.4Z" fill="#fff"/><path d="M5.6 11.2A12.6 12.6 0 0 1 23.4 11.2" fill="none" stroke="#fff" stroke-width="3.1"/><path d="M1.2 6.4A18.8 18.8 0 0 1 27.8 6.4" fill="none" stroke="#fff" stroke-width="3.1"/></svg>
<div class="t" style="top:11.6px;font-size:24.8px;color:#fff;left:2217.0px;letter-spacing:0.65px;-webkit-text-stroke:.35px #fff;">22%</div>
<div class="a" style="left:2277.0px;top:12.5px;width:47.5px;height:23.0px;border:2px solid #6a6a6a;border-radius:7px;"></div>
<div class="a" style="left:2281.0px;top:16.5px;width:9.3px;height:15.0px;background:#ffd42a;border-radius:3.5px;"></div>
<svg class="a" style="left:2326.5px;top:19.5px;" width="4" height="9" viewBox="0 0 4 9"><path d="M0 0C2.5 .8 3.6 2.6 3.6 4.5C3.6 6.4 2.5 8.2 0 9Z" fill="#6a6a6a"/></svg>
<div class="a" style="left:40.5px;top:48.3px;width:119.5px;height:93.7px;background:#141414;border-radius:31px 0 0 31px;"></div>
<div class="a" style="left:160.0px;top:48.3px;width:119.5px;height:93.7px;background:#222;border-radius:0 31px 31px 0;"></div>
<svg class="a" style="left:80.0px;top:75.0px;" width="40" height="40" viewBox="0 0 40 40"><path d="M2 2L38 38M38 2L2 38" stroke="#9a9a9a" stroke-width="3.6" stroke-linecap="round" fill="none"/></svg>
<svg class="a" style="left:192.0px;top:74.0px;" width="57" height="45" viewBox="0 0 57 45"><path d="M26 31.5H1.4V1.4H50V24" fill="none" stroke="#b3b3b3" stroke-width="2.8"/><rect x="26.5" y="24.5" width="29" height="19" fill="#b3b3b3"/><path d="M9 8L21.5 20.5M22 10.5V21H11.5" fill="none" stroke="#b3b3b3" stroke-width="2.8"/></svg>
<div class="a" style="left:2265.0px;top:1389.0px;width:71.0px;height:71.0px;background:#7f7f7f;border-radius:50%;"></div>
<svg class="a" style="left:2280.0px;top:1404.5px;" width="41" height="41" viewBox="0 0 41 41"><path d="M1.5 11V6.5A5 5 0 0 1 6.5 1.5H12M29 1.5H34.5A5 5 0 0 1 39.500 6.5V11M39.5 30V34.500A5 5 0 0 1 34.500 39.5H29M12 39.5H6.500A5 5 0 0 1 1.5 34.500V30" fill="none" stroke="#fff" stroke-width="2.4" stroke-linecap="round"/><path d="M10.5 12.500H31M10.5 20.5H31M10.5 28.300H24.5" stroke="#fff" stroke-width="2.4" stroke-linecap="round"/></svg>
<svg class="a" style="left:2263.5px;top:1562.0px;" width="48" height="27" viewBox="0 0 48 27"><circle cx="13" cy="13.3" r="10.6" fill="none" stroke="#7b8187" stroke-width="3.2"/><circle cx="12" cy="13.3" r="3.4" fill="#7b8187"/><path d="M23 8.500H44.5V22H31.500V17.500H24" fill="none" stroke="#7b8187" stroke-width="3.2" stroke-linejoin="round"/><path d="M37 17V21.500" stroke="#7b8187" stroke-width="2.600"/></svg>
<div class="a" style="left:866.0px;top:1613.5px;width:628.5px;height:10.8px;background:#2b2b2b;border-radius:5.500px;"></div>
</body></html>
